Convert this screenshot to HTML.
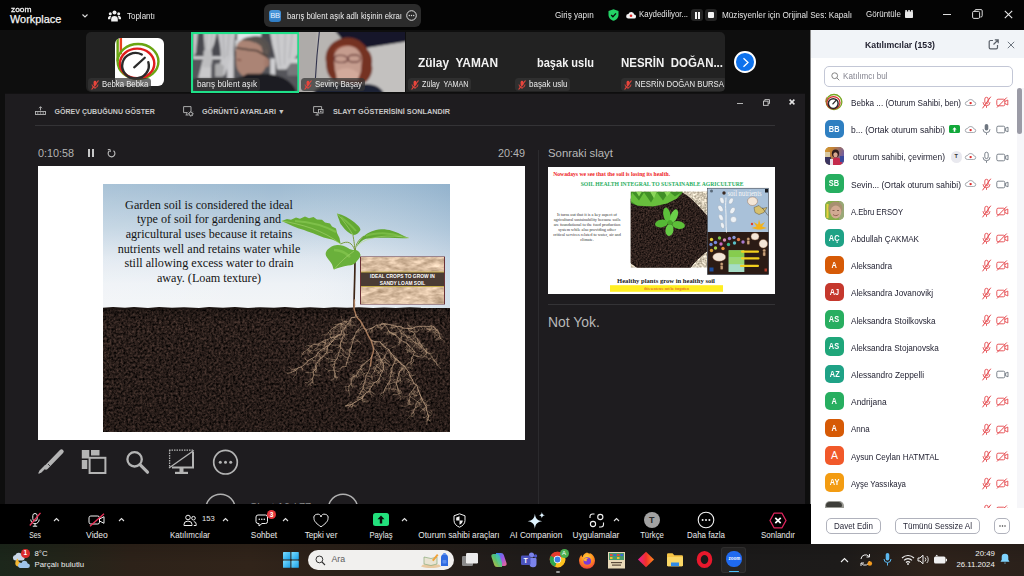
<!DOCTYPE html>
<html lang="tr">
<head>
<meta charset="utf-8">
<title>Zoom Workplace</title>
<style>
*{box-sizing:border-box;margin:0;padding:0}
html,body{width:1024px;height:576px;overflow:hidden;background:#0e0e0e}
body{position:relative;font-family:"Liberation Sans",sans-serif;color:#fff;font-size:10px;-webkit-font-smoothing:antialiased}
.abs{position:absolute}
.t{position:absolute;white-space:nowrap;line-height:1}
svg{position:absolute;overflow:visible}
/* top bar */
#top{left:0;top:0;width:1024px;height:29.700px;background:#040404}
/* strip */
.tile{position:absolute;top:32px;height:60px;background:#222;overflow:hidden}
.nm{position:absolute;height:13px;background:rgba(52,52,52,.72);border-radius:3.500px;color:#ececec;white-space:nowrap;overflow:hidden}
.big{position:absolute;font-weight:bold;color:#f2f2f2;white-space:nowrap;line-height:1}
/* share */
#share{left:5px;top:94px;width:800px;height:411px;background:#1e1c1f;overflow:hidden;box-shadow:0 -.3px 0 #1e1c1f}
/* panel */
#panel{left:811px;top:29.700px;width:213px;box-shadow:-.5px 0 0 #fff;height:513.900px;background:#fff;color:#222;overflow:hidden}
#phead{left:0;top:0;width:213px;height:28.700px;background:#f1f4f8}
.row{position:absolute;left:0;width:213px;height:27px}
.av{position:absolute;left:14.200px;top:4.200px;width:18.400px;height:18.400px;border-radius:5px;color:#fff;font-weight:bold;font-size:7px;line-height:18.400px;text-align:center;overflow:hidden}
.pn{position:absolute;left:40px;top:10.700px;line-height:1;color:#232333;white-space:nowrap}
/* toolbar */
#tb{left:0;top:504.300px;width:811px;height:39.300px;background:#000}
.tl{position:absolute;top:26.800px;font-size:9px;line-height:1;color:#ebebeb;white-space:nowrap;transform:translateX(-50%)}
/* taskbar */
#task{left:0;top:543.600px;width:1024px;height:32.400px;background:linear-gradient(180deg,rgba(0,0,0,.12),rgba(0,0,0,0) 60%),linear-gradient(90deg,#1c271b 0px,#23251a 60px,#2d2219 130px,#31241a 250px,#2c2119 330px,#201c1a 520px,#1b1a1a 700px,#1d1b1a 840px,#2f231b 930px,#2b211b 1024px)}
</style>
</head>
<body>
<div id="top" class="abs">
<span class="t" style="left:10.500px;top:5.800px;font-size:7.700px;transform-origin:0 50%;transform:scaleX(1.09);color:#f0f0f0;-webkit-text-stroke:.3px #f0f0f0">zoom</span>
<span class="t" style="left:10px;top:14.200px;font-size:10.900px;color:#f5f5f5;-webkit-text-stroke:.25px #f5f5f5">Workplace</span>
<svg style="left:81px;top:13px" width="8" height="6" viewBox="0 0 8 6"><path d="M1.5 1.5 L4 4 L6.5 1.5" fill="none" stroke="#ddd" stroke-width="1.1"/></svg>
<svg style="left:108px;top:9.500px" width="13" height="12" viewBox="0 0 13 12"><g fill="#f0f0f0"><circle cx="6.500" cy="2.600" r="2"/><circle cx="2.300" cy="3.800" r="1.500"/><circle cx="10.700" cy="3.800" r="1.500"/><path d="M3.200 11.500v-2.300a3.300 3.300 0 0 1 6.600 0v2.300z"/><path d="M0 9.300v-1.200a2.300 2.300 0 0 1 3.300-2.100a4 4 0 0 0-.9 2.600v.7zM13 9.300v-1.200a2.300 2.300 0 0 0-3.300-2.100a4 4 0 0 1 .9 2.600v.7z"/></g></svg>
<span class="t" style="left:127px;top:11.5px;font-size:8.9px;transform-origin:0 50%;transform:scaleX(0.8989);color:#e8e8e8">Toplantı</span>
<div class="abs" style="left:264px;top:4px;width:157px;height:23px;background:#2b2b2b;border-radius:6px"></div>
<div class="abs" style="left:269px;top:10px;width:12px;height:12px;background:linear-gradient(180deg,#4a98dc,#2f7cc4);border-radius:3px;font-size:7.600px;letter-spacing:-.4px;line-height:12.500px;text-align:center;color:#e4f1ff">BB</div>
<span class="t" style="left:286.500px;top:12.100px;font-size:8.9px;transform-origin:0 50%;transform:scaleX(0.8764);color:#ececec">barış bülent aşık adlı kişinin ekraı</span>
<svg style="left:406px;top:10px" width="11" height="11" viewBox="0 0 11 11"><circle cx="5.5" cy="5.500" r="4.800" fill="none" stroke="#ddd" stroke-width="1"/><circle cx="3.300" cy="5.500" r=".7" fill="#ddd"/><circle cx="5.500" cy="5.500" r=".7" fill="#ddd"/><circle cx="7.700" cy="5.500" r=".7" fill="#ddd"/></svg>
<span class="t" style="left:555px;top:10.59px;font-size:8.9px;transform-origin:0 50%;transform:scaleX(0.9157);color:#e4e4e4">Giriş yapın</span>
<svg style="left:608px;top:9px" width="11" height="12" viewBox="0 0 11 12"><path d="M5.500 0.300 L10.500 2 V6 C10.500 9 8 11 5.500 11.800 C3 11 0.500 9 0.500 6 V2 Z" fill="#23d366"/><path d="M3.200 6 L4.900 7.700 L8 4.400" fill="none" stroke="#0a0a0a" stroke-width="1.300"/></svg>
<svg style="left:626px;top:11px" width="10" height="8" viewBox="0 0 10 8"><path d="M2.300 7.500h5.600a2 2 0 0 0 .3-4a3 3 0 0 0-5.800-.4A2.200 2.200 0 0 0 2.300 7.500z" fill="#f3f3f3"/><circle cx="5" cy="4.800" r="1.300" fill="#e02828"/></svg>
<span class="t" style="left:638.500px;top:10.45px;font-size:8.9px;transform-origin:0 50%;transform:scaleX(0.8876);color:#e8e8e8">Kaydediliyor...</span>
<div class="abs" style="left:691px;top:9px;width:12px;height:12px;background:#242424;border-radius:3px"></div>
<div class="abs" style="left:694.500px;top:11.500px;width:2px;height:7px;background:#f4f4f4"></div><div class="abs" style="left:698px;top:11.500px;width:2px;height:7px;background:#f4f4f4"></div>
<div class="abs" style="left:705px;top:9px;width:12px;height:12px;background:#242424;border-radius:3px"></div>
<div class="abs" style="left:708px;top:12px;width:6px;height:6px;background:#f4f4f4;border-radius:1px"></div>
<span class="t" style="left:722px;top:10.62px;font-size:8.9px;transform-origin:0 50%;transform:scaleX(0.9213);color:#e4e4e4">Müzisyenler için Orijinal Ses: Kapalı</span>
<span class="t" style="left:865.500px;top:9.98px;font-size:8.9px;transform-origin:0 50%;transform:scaleX(0.8933);color:#e4e4e4">Görüntüle</span>
<svg style="left:905px;top:10px" width="8" height="8" viewBox="0 0 8 8"><rect x="0" y="1.500" width="8" height="6.500" rx=".8" fill="#e8e8e8"/><g fill="#e8e8e8"><rect x=".3" y="0" width="1.600" height="2"/><rect x="3.200" y="0" width="1.600" height="2"/><rect x="6.100" y="0" width="1.600" height="2"/></g></svg>
<div class="abs" style="left:943px;top:13.500px;width:8px;height:1px;background:#ddd"></div>
<svg style="left:972px;top:9px" width="11" height="10" viewBox="0 0 11 10"><rect x=".6" y="2.400" width="7" height="7" rx="1.200" fill="none" stroke="#ddd" stroke-width="1"/><path d="M2.800 2.400V1.800a1.200 1.200 0 0 1 1.200-1.200h5a1.200 1.200 0 0 1 1.200 1.200v5a1.200 1.200 0 0 1-1.200 1.200h-.6" fill="none" stroke="#ddd" stroke-width="1"/></svg>
<svg style="left:1004px;top:10px" width="9" height="9" viewBox="0 0 9 9"><path d="M.8.800 L8.200 8.200 M8.200.800 L.8 8.200" stroke="#e8e8e8" stroke-width="1.100"/></svg>
</div>
<!--S:strip--><div id="strip">
<div class="tile" style="left:86px;width:105px;border-radius:5px 0 0 5px">
<div class="abs" style="left:29px;top:5.700px;width:48.500px;height:48.500px;background:#fff;border-radius:6px;overflow:hidden">
<svg style="left:0;top:0" width="48.500" height="48.500" viewBox="0 0 48 48"><path d="M2.600 0V23" stroke="#6aa512" stroke-width="2.400" fill="none"/><path d="M5.800 0V16" stroke="#e8401e" stroke-width="2.400" fill="none"/><ellipse cx="22.800" cy="23.200" rx="20.200" ry="17.300" fill="none" stroke="#6aa512" stroke-width="2.400"/><ellipse cx="21.900" cy="25.200" rx="17" ry="14.700" fill="none" stroke="#e01e1e" stroke-width="2.400"/><path d="M26.500 16.300A13.200 12.600 0 1 0 33 24" fill="none" stroke="#2b2b2b" stroke-width="2.400" stroke-linecap="round"/><path d="M19 29L29.500 19.500" stroke="#2b2b2b" stroke-width="2.200" stroke-linecap="round"/></svg></div>
<div class="nm" style="left:2.2px;top:46px;width:63.2px"><svg style="left:2px;top:1.500px" width="10" height="10" viewBox="0 0 10 10"><rect x="3.600" y=".8" width="2.800" height="5" rx="1.400" fill="#e8453c"/><path d="M2 4.500a3 3 0 0 0 6 0M5 7.500V9" fill="none" stroke="#e8453c" stroke-width=".9"/><path d="M8.500.5L1.600 9.500" stroke="#e8453c" stroke-width="1.200"/></svg><span style="position:absolute;left:14px;top:0;font-size:8.6px;line-height:13.500px;transform-origin:0 50%;transform:scaleX(0.9037)">Bebka Bebka</span></div>
</div>
<div class="tile" style="left:191px;width:108.400px;background:#5e5e60;top:31.500px;height:61px">
<svg style="left:0;top:0" width="108.400" height="61" viewBox="0 0 108 60" preserveAspectRatio="none"><defs><filter id="b1" x="-20%" y="-20%" width="140%" height="140%"><feGaussianBlur stdDeviation=".9"/></filter></defs>
<g filter="url(#b1)"><rect x="-6" y="-6" width="120" height="72" fill="#55555a"/>
<rect x="-6" y="-6" width="120" height="30" fill="#4a4a50"/>
<rect x="2" y="24" width="40" height="2.600" fill="#d6d6d8"/>
<rect x="36" y="0" width="6.500" height="46" fill="#cdcdd0"/>
<rect x="46" y="0" width="24" height="10" fill="#e2e6ea"/><rect x="44" y="8" width="8" height="10" fill="#d0d3d6"/>
<rect x="79" y="26" width="5" height="18" fill="#cfcfd2"/><rect x="96" y="26" width="12" height="5" fill="#d2d2d4"/><rect x="96" y="31" width="12" height="12" fill="#77777a"/>
<path d="M2 0h5l-2 20l-3 6z" fill="#c4c4c6"/>
<path d="M12.500 0h13.500l-3 12l-2.600 6l-.4 28h-13l5-20l1.700-8z" fill="#c9c9cb"/>
<path d="M16 0l-1 18M21 0l-1.500 18" stroke="#a2a2a6" stroke-width=".8" fill="none"/>
<path d="M26.500 0h18l-2 14l-3.200 12l-5.600 16.500h-7.700l4-16l-1-12z" fill="#c6c6c9"/>
<path d="M32 0l1 26M38 0l-2 24" stroke="#a0a0a4" stroke-width=".8" fill="none"/>
<path d="M78.500 0h28.500v22l-6 6l-6 9h-9l-2-12l-3-12z" fill="#cbcbcd"/>
<path d="M86 0l3 34M94 0l-1 32M101 0l-3 26" stroke="#a6a6aa" stroke-width=".8" fill="none"/>
<path d="M12.500 19c2-2 6-2 8 0l1 8l-2 8h-8l1-8z" fill="#bdbdbf"/><path d="M24 32c3-2 7-1 9 2l-1 10h-8z" fill="#aaaaac"/>
<path d="M-6 46h42v20H-6z" fill="#38383b"/>
<ellipse cx="65" cy="17" rx="14" ry="13" fill="#57514f"/>
<path d="M44.500 18c0-7 6-12 14-12c8 0 16 5 17 14l-.5 12c-1 7-8 13-16 13c-8 0-13.500-6-14-13z" fill="#ab8474"/>
<path d="M50 8c6-5 18-5 24 4l2 12l-4-2l-2-8c-6-5-14-6-20-6z" fill="#5a5350"/>
<ellipse cx="75.500" cy="30" rx="2.500" ry="4.500" fill="#a37a6c"/>
<path d="M44.500 15.500l13 2l8.500 1l10 6" stroke="#3a2f2d" stroke-width="1.500" fill="none"/>
<path d="M46 27l4 1" stroke="#7a4a44" stroke-width="1.300"/>
<path d="M33 66c1-16 8-20 18-22l5-3l20 0c14 2 28 6 31 25z" fill="#1b1b21"/></g>
<rect x="1" y="1" width="106" height="58" fill="none" stroke="#1fe089" stroke-width="2.100"/></svg>
<div class="nm" style="left:2.5px;top:46.5px;width:66.5px"><span style="position:absolute;left:3.5px;top:0;font-size:8.6px;line-height:13.500px;transform-origin:0 50%;transform:scaleX(0.9514)">barış bülent aşık</span></div>
</div>
<div class="tile" style="left:299.400px;width:105.700px;background:#b5b5b8">
<svg style="left:0;top:0" width="105.700" height="60" viewBox="0 0 106 60" preserveAspectRatio="none"><g filter="url(#b1)"><rect x="-6" y="-6" width="118" height="72" fill="#b8b5b2"/>
<rect x="-6" y="-6" width="24" height="72" fill="#aeaba9"/>
<path d="M64 16.400L112 8.700V66H64z" fill="#c3c1bf"/>
<path d="M32 -6H112V8.700L63.800 16.400L43.800 8z" fill="#14162a"/>
<path d="M27 30c-2-12 6-22 18-24c10-2 20 4 24 12c4 4 5 10 4 15c2 6-2 14-6 17l-8 3l-24-4c-6-4-8-12-8-19z" fill="#743323"/>
<path d="M34 20c4-8 18-10 26-2c-4-2-8-3-12-2c-6 0-10 2-14 4z" fill="#934430"/>
<path d="M35 26c0-8 7-12 14-12c8 0 14 6 14 14l-1 12c-2 6-8 8-13 8c-6 0-12-4-13-10z" fill="#c59c8e"/>
<path d="M36 24.500c3-1.500 8-1.500 11 0c1.500 1 2 3 1 4.500c-2 2-8 2-11 .5c-1.500-1-1.500-3-1-5zM50 24c3-1.500 8-1.500 10.500 0c1 1.500 1 4 0 5c-2.500 1.500-8 1.500-10.500 0c-1-1.500-1-3.500 0-5z" fill="none" stroke="#5a2a2a" stroke-width="1.100"/>
<path d="M37 40c4-4 12-5 18-2l6 4l-2 6H38z" fill="#d2aa9b"/>
<path d="M13 66c0-9 10-14 22-14h32c10 0 19 5 19 14z" fill="#1b2136"/></g><path d="M20.800 -4L18 24L16.500 46" stroke="#1c1f3c" stroke-width="1.100" fill="none" opacity=".85"/></svg>
<div class="nm" style="left:1.8px;top:46px;width:64.0px"><svg style="left:2px;top:1.500px" width="10" height="10" viewBox="0 0 10 10"><rect x="3.600" y=".8" width="2.800" height="5" rx="1.400" fill="#e8453c"/><path d="M2 4.500a3 3 0 0 0 6 0M5 7.500V9" fill="none" stroke="#e8453c" stroke-width=".9"/><path d="M8.500.5L1.600 9.500" stroke="#e8453c" stroke-width="1.200"/></svg><span style="position:absolute;left:14px;top:0;font-size:8.6px;line-height:13.500px;transform-origin:0 50%;transform:scaleX(0.9025)">Sevinç Başay</span></div>
</div>
<div class="tile" style="left:406.200px;width:105.800px"><div class="big" style="left:12.3px;right:auto;top:23.500px;font-size:13px;text-align:left;transform-origin:0 50%;transform:scaleX(0.9151)">Zülay&nbsp; YAMAN</div><div class="nm" style="left:1.8px;top:46px;width:63.5px"><svg style="left:2px;top:1.500px" width="10" height="10" viewBox="0 0 10 10"><rect x="3.600" y=".8" width="2.800" height="5" rx="1.400" fill="#e8453c"/><path d="M2 4.500a3 3 0 0 0 6 0M5 7.500V9" fill="none" stroke="#e8453c" stroke-width=".9"/><path d="M8.500.5L1.600 9.500" stroke="#e8453c" stroke-width="1.200"/></svg><span style="position:absolute;left:14px;top:0;font-size:8.6px;line-height:13.500px;transform-origin:0 50%;transform:scaleX(0.8369)">Zülay&nbsp; YAMAN</span></div></div>
<div class="tile" style="left:512px;width:107.300px"><div class="big" style="left:24.5px;right:auto;top:23.500px;font-size:13px;text-align:left;transform-origin:0 50%;transform:scaleX(0.8482)">başak uslu</div><div class="nm" style="left:2.6px;top:46px;width:55.5px"><svg style="left:2px;top:1.500px" width="10" height="10" viewBox="0 0 10 10"><rect x="3.600" y=".8" width="2.800" height="5" rx="1.400" fill="#e8453c"/><path d="M2 4.500a3 3 0 0 0 6 0M5 7.500V9" fill="none" stroke="#e8453c" stroke-width=".9"/><path d="M8.500.5L1.600 9.500" stroke="#e8453c" stroke-width="1.200"/></svg><span style="position:absolute;left:14px;top:0;font-size:8.6px;line-height:13.500px;transform-origin:0 50%;transform:scaleX(0.9369)">başak uslu</span></div></div>
<div class="tile" style="left:619.300px;width:105.700px;border-radius:0 5px 5px 0"><div class="big" style="left:1.5px;right:auto;top:23.500px;font-size:13px;text-align:left;transform-origin:0 50%;transform:scaleX(0.8825)">NESRİN&nbsp; DOĞAN...</div><div class="nm" style="left:1.5px;top:46px;width:106.0px"><svg style="left:2px;top:1.500px" width="10" height="10" viewBox="0 0 10 10"><rect x="3.600" y=".8" width="2.800" height="5" rx="1.400" fill="#e8453c"/><path d="M2 4.500a3 3 0 0 0 6 0M5 7.500V9" fill="none" stroke="#e8453c" stroke-width=".9"/><path d="M8.500.5L1.600 9.500" stroke="#e8453c" stroke-width="1.200"/></svg><span style="position:absolute;left:14px;top:0;font-size:8.6px;line-height:13.500px;transform-origin:0 50%;transform:scaleX(0.9047)">NESRİN DOĞAN BURSA</span></div></div>
<div class="abs" style="left:734.300px;top:51.300px;width:21.400px;height:21.400px;border-radius:50%;background:#0e72ed;border:2px solid #fff"></div>
<svg style="left:741px;top:56.500px" width="9" height="11" viewBox="0 0 9 11"><path d="M2.500 1.300L7 5.500L2.500 9.700" fill="none" stroke="#fff" stroke-width="1.300"/></svg>
</div><!--E:strip-->
<div id="share" class="abs">
<!-- window controls -->
<div class="abs" style="left:732px;top:9px;width:6px;height:1.300px;background:#b4b4b4"></div>
<svg style="left:757.5px;top:4.5px" width="7" height="7" viewBox="0 0 7 7"><rect x=".5" y="2.200" width="4.600" height="4.200" fill="none" stroke="#bdbdbd" stroke-width="1"/><path d="M1.800 2V.6h4.700v4h-1.400" fill="none" stroke="#bdbdbd" stroke-width="1"/></svg>
<svg style="left:784px;top:5px" width="6" height="6" viewBox="0 0 6 6"><path d="M.6.600L5.400 5.400M5.400.600L.6 5.400" stroke="#e4e4e4" stroke-width="1.500"/></svg>
<!-- header -->
<svg style="left:30px;top:12px" width="11" height="9" viewBox="0 0 11 9"><g fill="none" stroke="#b8b8b8" stroke-width=".9"><rect x=".5" y="5.500" width="10" height="3"/><path d="M5.500 4.500V.8M4 2.200L5.500.700L7 2.200"/></g><g fill="#b8b8b8"><rect x="2" y="6.500" width="1.400" height="1"/><rect x="4.800" y="6.500" width="1.400" height="1"/><rect x="7.600" y="6.500" width="1.400" height="1"/></g></svg>
<span class="t" style="left:49.5px;top:14px;font-size:7.050px;font-weight:bold;color:#c6c6c6">GÖREV ÇUBUĞUNU GÖSTER</span>
<svg style="left:178px;top:11.5px" width="11" height="11" viewBox="0 0 11 11"><g fill="none" stroke="#b8b8b8" stroke-width=".9"><path d="M8 5V.6H.6v6h4"/><path d="M2.500 9h2.500M3.800 6.600V9"/><circle cx="7.800" cy="7.800" r="1.700"/></g><g stroke="#b8b8b8" stroke-width="1"><path d="M7.800 5v1M7.800 9.600v1M5 7.800h1M9.600 7.800h1M5.800 5.800l.7.700M9.100 9.100l.7.700M9.800 5.800l-.7.700M6.500 9.100l-.7.700"/></g></svg>
<span class="t" style="left:197px;top:14px;font-size:7.200px;font-weight:bold;color:#c6c6c6">GÖRÜNTÜ AYARLARI ▼</span>
<svg style="left:308px;top:12px" width="11" height="10" viewBox="0 0 11 10"><g fill="none" stroke="#b8b8b8" stroke-width=".9"><path d="M4.500 6.500H.6V.6h8v2.400"/><path d="M2.500 9h3.500M4.200 6.600V9"/><rect x="5.500" y="3.500" width="4.500" height="3.500"/></g><rect x="7" y="4.700" width="1.600" height="1.200" fill="#b8b8b8"/></svg>
<span class="t" style="left:328px;top:14px;font-size:7.250px;font-weight:bold;color:#c6c6c6">SLAYT GÖSTERİSİNİ SONLANDIR</span>
<div class="abs" style="left:30px;top:31px;width:740px;height:1px;background:#343336"></div>
<!-- timer -->
<span class="t" style="left:33px;top:53.5px;font-size:10.800px;color:#b4b4b4">0:10:58</span>
<div class="abs" style="left:83px;top:55px;width:2px;height:8px;background:#c8c8c8"></div><div class="abs" style="left:86.5px;top:55px;width:2px;height:8px;background:#c8c8c8"></div>
<svg style="left:102px;top:54.5px" width="9" height="9" viewBox="0 0 9 9"><path d="M6.500 1.700A3.400 3.400 0 1 1 2.300 1.900" fill="none" stroke="#c0c0c0" stroke-width="1.100"/><path d="M.8.600h2.400v2.400" fill="none" stroke="#c0c0c0" stroke-width="1"/></svg>
<span class="t" style="left:493px;top:53.5px;font-size:10.800px;color:#b4b4b4">20:49</span>
<!-- main slide -->
<div id="slide" class="abs" style="left:33px;top:72px;width:487px;height:274px;background:#fff;overflow:hidden"><svg style="left:65px;top:18px" width="347" height="248" viewBox="103 184 347 248">
<defs>
<linearGradient id="sky" x1="0" y1="0" x2="0" y2="1"><stop offset="0" stop-color="#9dbad1"/><stop offset=".35" stop-color="#bfd2e1"/><stop offset=".6" stop-color="#e0e8f0"/><stop offset=".8" stop-color="#eef2f6"/><stop offset="1" stop-color="#f3f5f7"/></linearGradient>
<linearGradient id="skyr" x1="0" y1="0" x2="1" y2="0"><stop offset="0" stop-color="#fff" stop-opacity=".12"/><stop offset=".5" stop-color="#fff" stop-opacity="0"/><stop offset="1" stop-color="#6d97bd" stop-opacity=".22"/></linearGradient>
<filter id="soil" x="0" y="0" width="100%" height="100%" color-interpolation-filters="sRGB"><feTurbulence type="fractalNoise" baseFrequency=".42" numOctaves="3" seed="4"/><feColorMatrix values=".46 0 0 0 -.068  .35 0 0 0 -.057  .31 0 0 0 -.052  0 0 0 0 1"/></filter>
<linearGradient id="soilsh" x1="0" y1="0" x2="0" y2="1"><stop offset="0" stop-color="#000" stop-opacity=".25"/><stop offset=".12" stop-color="#000" stop-opacity="0"/><stop offset="1" stop-color="#000" stop-opacity=".1"/></linearGradient>
<filter id="sand" x="0" y="0" width="100%" height="100%" color-interpolation-filters="sRGB"><feTurbulence type="fractalNoise" baseFrequency=".09 .22" numOctaves="3" seed="2"/><feColorMatrix values=".5 0 0 0 .6  .5 0 0 0 .49  .5 0 0 0 .38  0 0 0 0 1"/></filter>
<filter id="lb" x="-10%" y="-10%" width="120%" height="120%"><feGaussianBlur stdDeviation=".35"/></filter>
</defs>
<rect x="103" y="184" width="347" height="125" fill="url(#sky)"/><rect x="103" y="184" width="347" height="125" fill="url(#skyr)"/>
<rect x="103" y="308" width="347" height="124" fill="#2a1f1b"/>
<rect x="103" y="308" width="347" height="124" filter="url(#soil)"/>
<rect x="103" y="308" width="347" height="124" fill="url(#soilsh)"/>
<path d="M103 308.500l10-.8l12 .9l9-.7l14 .8l11-.9l13 .7l12-.5l15 .8l10-.9l14 .6l12-.7l13 .9l12-.6l14 .5l11-.8l13 .9l12-.6l14 .7l10-.8l13 .6l12-.5l14 .8l11-.7l12 .6l14-.7l11 .5" fill="none" stroke="#1c1411" stroke-width="1.600"/>
<g filter="url(#lb)">
<path d="M354.800 249C355.500 270 354 290 354 309" fill="none" stroke="#3d2619" stroke-width="1.700"/>
<path d="M354.800 250C352 243 348 240 340.700 244" fill="none" stroke="#7a9a3e" stroke-width="1"/><path d="M354.800 250C354.500 243 353.500 239 353 235" fill="none" stroke="#7a9a3e" stroke-width="1"/><path d="M355.300 250C356 244 358 240 364 236" fill="none" stroke="#7a9a3e" stroke-width="1"/>
<path d="M281.600 220.900L287 219L291 219.800L296 217.500L300 218.800L305 216.600L309 218.200L313.500 217.100L317 219.500L322 219.800L325 222.500L330 223.500L332 226.500L336 228.400L337 233L339.500 238L340.700 244.300C337 242 334.500 240.500 332 239.600C326 238.500 321 236.500 316 234.500C312 232.500 308 232 304 230C296 227.500 289 224.500 281.600 220.900z" fill="#68ad36"/>
<path d="M295 221C310 222 325 226 336 232" fill="none" stroke="#8fcf58" stroke-width="2.200" opacity=".55"/>
<path d="M281.600 220.900C300 224 324 230 340.700 244.300" fill="none" stroke="#b5dc7c" stroke-width=".5"/>
<path d="M337 213.400C343 214.500 349 218 354 222C358 225.500 360.800 228 360.400 230C359 233 356 235 353 235C349 233.500 345 230 343 227C341 224 340.500 224.600 339.500 221C338.500 218 337.500 216 337 213.400z" fill="#63a833"/>
<path d="M341 217C346 221 352 226 356 231" fill="none" stroke="#8fcf58" stroke-width="2" opacity=".5"/>
<path d="M337 213.400C343 220 349 228 353 235" fill="none" stroke="#b5dc7c" stroke-width=".5"/>
<path d="M356.600 247C358 242 361 238.500 364 236C368 232.500 374 229.800 381 229.300C388 229 395 231.500 400 234C403 235.500 406 237 409 238C402 238.800 395 238 388.500 237.800C381 237.800 373 237.800 366 238.700C362 240 359 243 356.600 247z" fill="#62a732"/>
<path d="M366 236C376 232 390 232.500 402 236.500" fill="none" stroke="#8fcf58" stroke-width="1.800" opacity=".5"/>
<path d="M358 245C368 236 390 234 409 238" fill="none" stroke="#b5dc7c" stroke-width=".5"/>
<path d="M338 245C334 244.500 329 247.500 326.500 251C325 253.500 325.700 255.500 327 257.500C328.500 260 331 262 332 264.500C333 266.500 333 269 334 269.600C338 268 343 266 348 265.500C352 265.500 354.800 264 357 261C359.500 258 360.800 256.500 360.400 254.600C359.500 251.500 357.500 250 355 250C352 250 350 249.500 348 248C345 246 341.500 245 338 245z" fill="#6bb03a"/>
<path d="M334 250C340 250 346 253 350 257" fill="none" stroke="#8fcf58" stroke-width="2.500" opacity=".5"/>
<path d="M354 251C347 256 340 262 334 269.600" fill="none" stroke="#b5dc7c" stroke-width=".5"/>
</g>
<g fill="none" stroke="#c4a486" stroke-linecap="round" stroke-linejoin="round"><path d="M354.5 300.0L354.3 302.7L354.5 305.3L354.0 308.1L354.4 310.3L355.4 312.9L355.7 314.8L357.7 318.2L360.2 320.6L362.4 324.4L363.5 326.4L364.4 328.3L366.0 330.6L367.4 333.8L369.0 337.0L371.0 340.3L371.8 342.8L372.7 345.5L373.5 347.8L373.4 351.1L372.8 353.5L371.9 355.8L371.2 359.0L370.9 362.6L370.3 365.9" stroke-width="1.5" stroke="#a5795a"/><path d="M356.0 315.0L354.8 317.3L351.1 317.8L350.7 319.9L349.2 322.5L345.9 325.6L345.5 327.6L341.9 330.4L341.2 333.8L337.3 335.5L334.6 337.9L333.2 340.8L330.1 343.9L326.8 346.4L324.0 348.3L321.3 349.9L318.1 352.3L316.2 355.9L311.6 358.7L308.1 360.5L306.0 363.6L301.3 366.9L298.2 367.9L295.8 370.4L291.6 372.2" stroke-width="0.7"/><path d="M345.0 328.0L343.5 331.5L344.1 334.2L342.8 337.2L341.5 341.1L340.3 344.2L340.7 348.1L339.0 352.2L338.1 355.6L337.2 358.6L334.9 361.5L334.8 363.8L333.8 367.4L333.9 370.1L335.0 373.5L335.2 376.8" stroke-width="0.6"/><path d="M330.0 344.0L328.0 346.0L327.0 348.9L326.7 352.0L323.6 356.2L320.2 358.7L317.4 362.5L315.8 365.9L316.0 369.2L313.2 371.6L313.7 374.6L312.6 378.6L312.8 382.2" stroke-width="0.6"/><path d="M338.0 336.0L336.2 337.0L333.3 337.2L330.5 337.5L327.8 339.5L325.4 339.9L322.5 341.3L318.7 344.1L314.4 344.2L311.6 345.7L308.5 348.7L307.2 349.8L303.7 352.2" stroke-width="0.5"/><path d="M366.0 331.0L368.6 329.0L371.2 328.6L374.3 326.7L376.8 325.1L379.9 325.0L383.8 323.6L387.1 324.1L391.6 325.1L396.8 326.4L399.6 326.4L403.4 328.1L407.7 328.5L412.4 328.4L415.1 327.0L419.8 326.2L424.7 326.4L428.5 326.4L431.2 325.8L433.5 326.5L435.4 328.8L437.2 329.7L438.9 332.7L439.3 335.7L440.6 338.4" stroke-width="0.7"/><path d="M371.0 340.0L373.9 341.4L376.8 341.8L380.2 341.9L381.9 344.5L384.9 347.2L388.8 349.6L391.0 353.0L392.9 355.2L395.3 358.7L398.2 360.5L401.0 363.9L404.6 366.2L406.1 368.6L408.7 371.9L409.8 375.8L412.4 379.6L413.7 383.4L416.8 385.1L418.2 389.9L419.8 393.9L421.7 398.3L423.9 402.8L426.2 406.9L426.8 410.6L427.6 413.7L428.6 415.9L427.9 419.8" stroke-width="0.8"/><path d="M373.5 348.0L375.8 350.5L377.9 353.3L379.7 356.7L380.9 360.1L383.3 363.4L383.4 366.0L383.5 369.6L380.7 374.4L379.5 378.2L376.7 381.5L374.3 382.6L372.3 385.7L370.1 388.7L368.8 391.4L365.8 393.1L364.0 395.6L362.1 398.2L359.9 399.3L355.3 402.0L350.9 404.8L345.6 405.9" stroke-width="0.7"/><path d="M372.0 356.0L370.0 359.1L366.9 361.6L364.3 364.0L361.8 366.5L360.0 369.3L358.1 372.1L356.5 375.4L353.5 376.5L351.6 379.2L351.2 383.5L348.9 386.1L348.7 390.6" stroke-width="0.6"/><path d="M384.0 324.0L386.9 327.3L388.3 330.2L389.4 331.8L392.8 333.3L395.8 335.2L398.2 337.6L401.0 340.2L404.1 341.9L408.6 344.9L409.6 346.4L412.3 348.8L414.6 351.5L413.4 355.0L411.8 357.8L411.1 361.7" stroke-width="0.6"/><path d="M396.0 358.0L394.4 362.0L393.9 363.8L392.1 367.3L392.0 371.2L390.2 376.5L390.2 380.3L387.8 384.0L385.5 387.9L383.6 392.3" stroke-width="0.6"/><path d="M362.0 324.0L360.7 327.1L358.3 329.3L356.1 332.1L354.7 335.9L354.0 337.9L352.5 342.2L351.5 346.7L349.9 350.0L349.8 354.8L348.1 358.1L346.7 362.5L346.0 366.4" stroke-width="0.6"/><path d="M408.0 328.0L409.3 330.8L412.0 331.6L414.9 333.8L415.2 337.0L417.6 338.8L419.6 342.2L421.7 345.6L424.7 349.6L426.7 352.8" stroke-width="0.6"/><path d="M404.0 366.0L402.0 369.5L399.6 371.2L398.7 374.8L397.8 378.0L397.4 380.3L396.2 383.2L397.7 388.1L398.7 390.0L400.1 393.2" stroke-width="0.6"/><path d="M416.0 386.0L413.4 389.4L411.4 391.7L409.4 394.0L410.2 396.6L409.3 399.8L408.9 404.7" stroke-width="0.5"/><path d="M396.0 326.0L397.4 327.9L400.3 330.6L401.2 333.3L404.7 334.8L406.9 337.1L409.9 337.4L413.7 341.6L416.9 343.2L420.1 346.4L423.9 349.2L426.2 351.8L429.3 353.3L432.0 356.8L434.1 360.3L436.8 363.9" stroke-width="0.5"/><path d="M370.0 366.0L369.6 369.4L367.8 372.8L366.0 375.4L365.6 379.2L365.0 381.8L363.6 385.3L363.1 388.6L360.9 391.8L360.0 393.6" stroke-width="0.6"/><path d="M350.0 320.0L348.2 321.5L346.1 321.7L344.5 321.4L341.6 323.2L338.2 324.3L335.8 326.4L333.4 327.7L329.9 330.5L328.5 332.6" stroke-width="0.5"/><path d="M388.0 350.0L386.6 352.6L384.9 356.1L384.7 358.0L382.5 359.7L380.5 362.5L377.7 364.4L376.4 366.1L375.2 368.6L374.4 371.6" stroke-width="0.5"/><path d="M422.0 398.0L419.3 400.1L417.3 401.6L415.9 404.1L415.6 407.4L414.4 409.1L413.5 412.4" stroke-width="0.5"/><path d="M351.1 317.8L352.8 317.5L354.6 317.5L356.3 317.2L358.0 316.7M350.7 319.9L351.1 320.9L350.7 321.7L350.8 322.7L350.1 323.5M349.2 322.5L350.4 324.1L352.2 325.2L354.4 325.3L356.4 326.1M345.9 325.6L344.1 325.1L342.4 324.4L340.5 324.7L339.5 326.2M345.5 327.6L343.5 327.5L341.8 326.5L341.3 324.7L340.3 323.1M341.9 330.4L342.2 331.9L343.6 332.9L344.8 334.1L344.4 335.7M341.2 333.8L340.0 334.8L338.4 334.8L336.9 335.4L336.5 336.8M337.3 335.5L335.3 336.5L333.1 337.2L331.3 338.4L330.7 340.4M334.6 337.9L336.3 336.5L338.5 335.8L340.7 335.4L342.6 334.3M333.2 340.8L330.9 341.3L329.2 342.9L327.6 344.6L327.3 346.8M330.1 343.9L332.0 345.2L334.3 345.3L336.7 345.1L339.1 345.4M326.8 346.4L327.5 348.1L327.7 349.9L327.1 351.7L327.5 353.4M324.0 348.3L324.5 348.9L324.9 349.6L324.9 350.4L325.0 351.3M321.3 349.9L320.0 349.0L318.4 349.1L317.1 350.0L315.7 350.7M318.1 352.3L318.9 353.7L319.6 355.1L320.3 356.6L320.6 358.1M316.2 355.9L317.7 356.1L319.3 356.2L320.6 357.0L320.9 358.4M311.6 358.7L312.4 359.4L313.2 360.1L314.2 360.6L315.2 360.9M308.1 360.5L307.0 360.5L306.0 360.0L305.7 359.0L305.0 358.1M306.0 363.6L307.1 364.5L308.5 364.3L309.6 363.5L311.0 363.0M301.3 366.9L301.6 367.7L302.4 368.3L302.7 369.2L302.1 369.9M298.2 367.9L297.3 368.4L296.2 368.6L295.2 368.8L294.5 369.6M295.8 370.4L296.6 372.4L296.1 374.4L294.5 376.0L293.3 377.8M291.6 372.2L290.6 372.6L289.4 372.7L288.3 373.1L287.2 373.2M344.1 334.2L344.2 335.7L344.7 337.2L345.8 338.3L346.5 339.7M342.8 337.2L341.2 338.7L338.8 338.9L336.4 339.3L334.1 339.8M341.5 341.1L341.0 341.8L340.5 342.6L340.6 343.5L341.3 344.0M340.3 344.2L340.4 345.1L340.0 345.9L339.5 346.5L339.1 347.3M340.7 348.1L341.5 348.5L342.2 349.0L342.8 349.6L343.5 350.1M339.0 352.2L337.4 353.3L335.9 354.6L334.9 356.2L335.2 358.0M338.1 355.6L339.1 356.1L340.2 355.8L341.1 355.3L342.2 355.1M337.2 358.6L335.3 359.7L332.9 359.3L330.6 359.1L328.7 357.9M334.9 361.5L333.2 361.6L331.5 361.4L330.0 362.2L328.3 362.2M334.8 363.8L334.1 364.2L333.2 364.2L332.6 364.8L332.5 365.6M333.8 367.4L334.3 369.5L334.8 371.7L335.1 373.9L334.5 376.0M333.9 370.1L331.5 370.3L329.1 370.4L326.8 369.7L325.2 368.0M335.0 373.5L334.0 374.8L334.4 376.4L335.8 377.3L337.6 377.5M335.2 376.8L333.9 377.7L333.7 379.1L332.5 379.9L330.9 380.1M327.0 348.9L325.7 348.8L324.5 348.9L323.5 348.2L322.2 348.3M326.7 352.0L326.3 352.8L326.0 353.6L325.1 353.9L324.2 353.8M323.6 356.2L324.7 357.3L326.2 358.1L327.8 358.6L329.2 359.5M320.2 358.7L319.8 359.6L318.8 360.0L317.8 360.3L317.3 361.2M317.4 362.5L315.7 363.3L315.2 364.9L315.3 366.6L316.0 368.2M315.8 365.9L316.3 367.7L316.7 369.4L316.4 371.2L315.0 372.5M316.0 369.2L315.0 369.9L313.8 369.6L313.0 368.8L312.3 367.9M313.2 371.6L311.6 372.5L309.8 372.8L307.9 372.5L306.0 372.5M313.7 374.6L315.4 374.8L317.0 375.1L318.6 375.1L320.3 375.3M312.6 378.6L310.9 379.9L309.3 381.3L307.5 382.6L305.3 382.4M312.8 382.2L311.2 382.8L309.8 383.9L308.3 384.7L307.9 386.3M333.3 337.2L333.9 337.7L334.6 338.1L335.3 338.5L335.5 339.1M330.5 337.5L331.9 338.2L332.5 339.5L331.7 340.8L331.7 342.2M327.8 339.5L326.8 341.0L325.3 342.2L323.3 342.1L321.3 342.1M325.4 339.9L325.5 341.1L325.2 342.2L325.5 343.3L325.4 344.5M322.5 341.3L323.3 342.2L324.5 342.5L325.2 343.4L324.8 344.5M318.7 344.1L318.0 346.0L317.1 347.9L315.1 348.6L313.8 350.3M314.4 344.2L316.0 344.5L317.5 345.1L319.0 345.6L320.4 345.0M311.6 345.7L309.9 346.0L308.3 345.5L306.5 345.8L305.3 346.9M308.5 348.7L308.0 350.6L307.8 352.5L308.2 354.4L309.5 355.9M307.2 349.8L308.0 350.6L309.2 350.8L310.4 350.8L311.4 350.4M303.7 352.2L303.6 352.9L303.1 353.6L302.4 353.8L301.5 354.0M371.2 328.6L371.2 329.5L371.6 330.3L371.7 331.2L371.9 332.1M374.3 326.7L372.5 327.8L370.4 328.6L369.4 330.4L368.7 332.4M376.8 325.1L378.1 326.5L379.6 327.6L381.4 328.4L383.2 327.8M379.9 325.0L381.0 326.0L380.9 327.4L381.3 328.8L381.4 330.2M383.8 323.6L382.4 323.1L381.2 323.7L380.6 324.9L379.9 326.0M387.1 324.1L385.9 324.5L384.6 324.2L383.3 324.2L382.1 323.7M391.6 325.1L391.5 326.3L391.4 327.4L391.9 328.4L392.8 329.2M396.8 326.4L395.4 326.7L394.3 327.5L392.9 327.9L391.7 328.7M399.6 326.4L400.6 326.3L401.7 326.3L402.5 327.0L402.4 327.9M403.4 328.1L402.5 328.4L402.1 329.2L401.7 330.0L401.3 330.7M407.7 328.5L408.8 328.2L409.7 328.7L410.7 328.8L411.8 328.9M412.4 328.4L411.5 327.8L410.6 327.2L409.6 326.8L409.1 325.9M415.1 327.0L414.2 327.8L414.3 329.0L415.0 329.9L414.7 331.1M419.8 326.2L421.1 326.8L422.1 327.7L422.5 329.0L423.1 330.1M424.7 326.4L426.2 327.6L427.2 329.2L429.0 330.1L431.0 329.7M428.5 326.4L430.9 326.8L432.1 328.8L434.3 329.9L436.6 330.7M431.2 325.8L431.6 327.4L430.8 328.9L429.7 330.2L428.5 331.5M433.5 326.5L432.7 327.7L431.7 328.7L430.1 328.8L429.0 329.6M435.4 328.8L433.3 329.9L430.9 329.8L428.5 329.7L427.1 328.0M437.2 329.7L436.5 331.0L435.1 331.8L433.5 331.7L432.1 331.0M438.9 332.7L437.1 332.3L435.5 333.2L433.8 332.6L432.0 332.9M439.3 335.7L439.9 336.4L440.6 337.1L441.5 337.2L442.4 336.8M440.6 338.4L439.4 339.2L438.2 340.0L436.8 339.8L435.3 339.9M376.8 341.8L375.7 342.0L374.8 342.6L374.2 343.5L374.2 344.5M380.2 341.9L380.9 343.3L382.4 344.0L383.3 345.2L384.7 346.1M381.9 344.5L383.4 344.5L384.6 343.8L385.8 343.0L387.1 342.4M384.9 347.2L385.4 347.8L386.1 348.2L386.1 348.9L386.0 349.7M388.8 349.6L389.3 351.7L390.5 353.5L390.7 355.6L392.0 357.4M391.0 353.0L391.2 354.4L391.6 355.8L390.7 357.0L391.2 358.4M392.9 355.2L393.7 356.4L393.9 357.9L395.1 358.8L396.8 358.7M395.3 358.7L397.1 359.1L398.1 360.5L398.7 362.1L400.4 362.8M398.2 360.5L397.4 360.3L396.5 360.2L395.8 359.8L394.9 359.5M401.0 363.9L402.2 365.6L402.0 367.6L401.9 369.6L403.4 371.0M404.6 366.2L404.2 367.7L404.1 369.3L403.9 370.8L403.6 372.4M406.1 368.6L404.5 369.1L402.9 368.5L401.2 368.1L399.6 367.6M408.7 371.9L407.8 372.0L407.0 372.5L406.7 373.2L406.2 374.0M409.8 375.8L410.9 375.7L412.1 375.8L413.2 375.4L414.1 374.6M412.4 379.6L411.0 380.4L409.3 380.1L408.0 379.1L406.4 378.7M413.7 383.4L412.8 383.5L412.2 384.2L411.3 384.2L410.4 384.5M416.8 385.1L414.9 385.9L414.1 387.7L413.1 389.4L413.4 391.3M418.2 389.9L418.6 391.1L417.9 392.1L416.6 392.4L415.5 391.7M419.8 393.9L420.7 395.9L421.5 397.9L420.4 399.8L421.3 401.8M421.7 398.3L421.7 399.0L422.0 399.6L422.2 400.3L422.4 401.0M423.9 402.8L425.4 403.4L426.2 404.7L427.7 405.4L429.4 405.4M426.2 406.9L425.0 408.4L423.0 409.2L421.3 410.4L420.3 412.0M426.8 410.6L425.7 409.9L424.3 410.0L423.0 409.7L422.4 408.6M427.6 413.7L427.3 415.2L426.2 416.4L425.1 417.5L423.4 417.6M428.6 415.9L427.7 417.3L426.9 418.8L427.2 420.4L426.0 421.7M427.9 419.8L428.7 419.9L429.3 420.4L429.9 420.8L430.3 421.4M377.9 353.3L380.0 352.9L382.0 353.6L383.3 355.1L385.2 356.0M379.7 356.7L377.7 356.1L376.7 354.4L376.4 352.5L377.2 350.7M380.9 360.1L382.5 359.8L384.0 360.3L385.5 361.0L386.0 362.4M383.3 363.4L385.2 362.6L387.1 363.1L388.6 364.3L389.2 366.1M383.4 366.0L382.9 367.4L383.1 368.9L384.2 370.1L384.9 371.4M383.5 369.6L381.6 370.4L380.2 371.8L378.7 373.1L377.2 374.4M380.7 374.4L380.7 375.8L381.7 376.9L382.9 377.9L383.6 379.2M379.5 378.2L378.9 379.0L379.2 379.9L380.0 380.6L380.8 381.3M376.7 381.5L377.6 381.3L378.4 381.4L379.3 381.4L380.0 380.9M374.3 382.6L372.8 383.0L371.5 383.9L369.9 383.6L368.5 384.2M372.3 385.7L371.2 386.7L369.7 386.8L368.1 387.0L366.7 387.5M370.1 388.7L368.2 388.4L366.3 388.4L364.5 387.8L362.7 388.2M368.8 391.4L370.5 391.9L372.3 392.1L373.3 393.5L374.9 394.2M365.8 393.1L364.1 394.2L363.1 395.8L361.5 396.9L359.8 397.9M364.0 395.6L362.5 396.7L360.7 397.0L358.8 397.5L357.7 398.9M362.1 398.2L363.2 398.9L364.0 399.8L364.0 400.9L364.4 402.0M359.9 399.3L359.2 399.5L358.4 399.3L357.6 399.5L356.9 399.4M355.3 402.0L353.7 402.7L352.7 404.1L352.5 405.7L351.9 407.2M350.9 404.8L350.0 405.5L349.5 406.4L348.7 407.1L348.7 408.1M345.6 405.9L347.3 405.0L348.5 403.6L350.1 402.6L352.0 402.1M366.9 361.6L365.2 362.5L363.6 363.6L362.3 364.9L360.8 366.1M364.3 364.0L363.5 364.9L362.7 365.8L361.4 365.7L360.4 366.5M361.8 366.5L361.9 368.3L361.7 370.2L362.6 371.9L363.7 373.5M360.0 369.3L361.1 369.6L362.2 369.4L362.9 368.6L363.9 368.1M358.1 372.1L358.0 373.1L358.6 374.1L359.0 375.1L359.1 376.2M356.5 375.4L356.5 376.2L356.9 376.8L357.6 377.3L357.8 378.1M353.5 376.5L352.2 376.9L351.4 378.0L350.5 378.9L349.1 379.0M351.6 379.2L353.6 378.3L354.6 376.5L353.9 374.7L351.9 373.9M351.2 383.5L351.4 384.5L351.5 385.4L351.8 386.3L352.6 386.9M348.9 386.1L348.0 386.5L347.1 386.5L346.1 386.7L345.1 386.6M348.7 390.6L349.2 391.8L349.0 393.1L349.8 394.2L349.3 395.4M388.3 330.2L389.4 332.2L391.7 332.9L393.6 334.4L396.0 334.9M389.4 331.8L388.3 331.7L387.3 332.2L387.0 333.2L387.0 334.2M392.8 333.3L392.9 334.2L393.7 334.6L394.7 334.7L395.3 334.1M395.8 335.2L394.1 334.5L392.1 334.4L390.5 333.5L389.1 332.3M398.2 337.6L399.2 338.7L399.3 340.1L399.8 341.4L399.1 342.7M401.0 340.2L400.3 341.4L400.0 342.8L398.8 343.6L398.2 344.9M404.1 341.9L406.0 342.0L407.3 343.2L407.8 344.9L409.2 346.1M408.6 344.9L407.7 346.6L406.8 348.4L407.2 350.2L407.5 352.2M409.6 346.4L409.8 347.7L409.4 349.0L409.2 350.4L409.9 351.5M412.3 348.8L411.3 350.4L409.3 351.0L407.4 350.1L405.5 349.5M414.6 351.5L412.7 351.5L410.8 351.8L408.9 351.8L407.1 352.5M413.4 355.0L415.5 355.9L417.6 356.7L419.9 356.4L421.9 355.4M411.8 357.8L413.4 359.4L413.3 361.6L411.7 363.3L409.8 364.8M411.1 361.7L409.8 362.5L408.3 362.9L407.4 364.1L406.3 365.2M393.9 363.8L394.8 363.6L395.8 363.5L396.8 363.4L397.4 362.8M392.1 367.3L391.0 369.2L391.5 371.3L393.2 372.8L395.5 373.3M392.0 371.2L390.9 372.2L389.9 373.2L389.2 374.4L388.6 375.6M390.2 376.5L391.5 376.3L392.7 375.8L393.2 374.7L394.0 373.7M390.2 380.3L389.9 381.1L389.8 381.9L389.4 382.6L388.7 383.0M387.8 384.0L390.0 383.9L392.0 383.2L393.9 382.2L396.0 382.4M385.5 387.9L387.3 388.8L389.3 388.8L390.7 387.5L390.7 385.6M383.6 392.3L382.3 392.9L381.1 393.4L380.7 394.6L381.3 395.7M358.3 329.3L360.6 329.4L362.7 328.6L365.0 328.6L366.8 329.9M356.1 332.1L357.6 331.9L358.6 330.8L360.2 330.5L361.5 331.2M354.7 335.9L354.1 336.8L353.5 337.7L352.7 338.4L351.8 339.0M354.0 337.9L353.9 338.7L353.1 339.2L352.2 339.4L351.3 339.6M352.5 342.2L354.9 342.1L357.0 340.9L359.3 341.5L360.5 343.5M351.5 346.7L351.3 347.5L350.8 348.0L350.3 348.6L349.4 348.8M349.9 350.0L350.0 351.7L351.3 353.0L353.3 352.8L355.1 352.3M349.8 354.8L347.9 355.0L346.2 354.2L345.6 352.5L346.2 350.9M348.1 358.1L346.1 357.3L344.2 356.7L343.2 355.0L341.8 353.6M346.7 362.5L347.4 362.7L347.8 363.3L348.4 363.8L349.0 364.2M346.0 366.4L344.3 366.9L342.5 366.6L341.1 367.6L340.6 369.2M412.0 331.6L414.2 331.7L416.4 332.1L418.2 331.0L418.8 329.2M414.9 333.8L413.6 334.7L413.5 336.1L412.9 337.5L413.5 338.8M415.2 337.0L414.8 338.2L415.0 339.6L415.7 340.7L415.4 342.0M417.6 338.8L417.5 341.0L418.6 343.0L420.6 344.2L423.0 344.1M419.6 342.2L419.6 343.1L418.9 343.8L417.9 343.8L416.8 343.7M421.7 345.6L421.2 346.3L421.4 347.1L421.7 347.9L421.5 348.7M424.7 349.6L425.4 350.0L425.5 350.7L425.2 351.4L424.4 351.7M426.7 352.8L426.1 354.7L426.2 356.6L427.6 358.1L429.1 359.6M399.6 371.2L399.9 372.0L399.6 372.7L399.0 373.3L398.1 373.5M398.7 374.8L399.8 376.5L400.4 378.5L400.6 380.5L402.2 381.8M397.8 378.0L397.3 379.0L396.2 379.4L395.0 379.3L393.9 379.7M397.4 380.3L398.1 380.6L398.9 380.7L399.6 380.3L400.4 380.2M396.2 383.2L396.4 384.2L396.8 385.2L397.4 386.1L397.3 387.1M397.7 388.1L397.4 389.6L398.1 391.0L397.9 392.5L398.9 393.6M398.7 390.0L396.8 390.0L395.2 389.2L393.4 389.1L391.6 389.3M400.1 393.2L398.4 393.8L396.8 394.6L395.0 394.7L393.2 394.5M411.4 391.7L411.9 393.3L413.2 394.5L414.9 395.2L416.6 395.8M409.4 394.0L411.3 394.2L413.1 393.8L414.3 392.5L414.7 390.9M410.2 396.6L411.9 397.9L413.9 399.0L415.6 400.3L417.4 401.6M409.3 399.8L409.0 400.4L409.3 401.1L410.0 401.3L410.8 401.3M408.9 404.7L410.0 404.4L411.1 404.2L412.3 404.2L413.4 403.8M400.3 330.6L398.4 332.0L396.0 332.3L393.6 332.8L391.4 333.6M401.2 333.3L401.8 334.9L401.5 336.6L401.0 338.3L401.9 339.9M404.7 334.8L404.0 335.8L402.8 336.5L401.5 336.8L400.8 338.0M406.9 337.1L407.3 338.6L408.7 339.4L410.4 339.4L412.1 339.4M409.9 337.4L407.5 336.9L405.6 335.4L404.4 333.5L403.3 331.5M413.7 341.6L411.6 342.2L409.7 341.2L407.8 340.4L405.7 339.7M416.9 343.2L415.0 344.1L414.5 346.0L412.8 347.2L412.6 349.1M420.1 346.4L421.2 346.0L422.4 345.8L423.6 345.7L424.7 346.1M423.9 349.2L423.5 350.1L422.9 350.9L421.9 351.3L420.8 351.5M426.2 351.8L426.3 353.5L425.1 354.9L424.4 356.5L422.7 357.4M429.3 353.3L427.4 352.9L426.3 351.4L426.6 349.7L426.7 347.9M432.0 356.8L431.2 357.5L430.6 358.4L429.5 358.6L428.3 358.9M434.1 360.3L434.3 361.1L435.0 361.6L435.9 361.9L436.8 361.8M436.8 363.9L437.1 365.3L438.6 366.1L439.4 367.4L440.4 368.6M367.8 372.8L368.4 373.1L369.1 372.9L369.8 373.2L370.1 373.8M366.0 375.4L367.4 376.2L369.1 376.3L370.5 377.0L372.2 376.8M365.6 379.2L364.1 380.7L362.1 381.7L361.3 383.6L360.0 385.2M365.0 381.8L364.8 382.6L364.2 383.0L363.4 383.4L363.0 384.0M363.6 385.3L362.8 386.5L361.7 387.5L360.7 388.5L359.3 389.0M363.1 388.6L364.7 390.0L365.8 391.6L367.9 392.1L370.0 392.1M360.9 391.8L362.0 391.6L362.9 392.0L363.9 391.8L364.5 391.0M360.0 393.6L361.8 394.6L362.7 396.2L362.6 398.1L362.5 399.9M346.1 321.7L345.7 322.4L345.3 323.1L345.3 323.9L344.7 324.5M344.5 321.4L346.1 322.1L347.3 323.3L349.0 323.9L350.6 324.7M341.6 323.2L341.2 325.3L340.6 327.4L340.7 329.5L341.5 331.5M338.2 324.3L340.5 323.8L342.8 324.0L344.7 322.7L345.0 320.7M335.8 326.4L335.7 327.3L334.9 327.8L334.6 328.7L334.1 329.4M333.4 327.7L334.9 327.6L336.0 328.6L336.9 329.7L338.2 330.2M329.9 330.5L330.4 331.3L330.7 332.2L331.6 332.7L331.9 333.6M328.5 332.6L329.3 333.5L329.9 334.5L330.3 335.6L330.6 336.7M384.9 356.1L384.5 358.0L382.8 359.2L380.7 359.7L378.5 359.5M384.7 358.0L385.3 358.8L386.2 359.3L386.8 360.2L387.2 361.1M382.5 359.7L381.3 360.7L379.6 360.7L378.0 360.8L376.5 360.2M380.5 362.5L380.7 363.9L380.3 365.3L379.7 366.6L378.3 367.3M377.7 364.4L375.5 365.3L373.8 366.9L373.7 369.1L375.0 370.9M376.4 366.1L378.3 367.2L379.6 368.9L381.3 370.2L383.0 371.6M375.2 368.6L376.1 370.3L378.0 370.9L380.0 371.0L382.0 370.8M374.4 371.6L372.9 373.3L371.7 375.2L372.2 377.3L372.4 379.5M417.3 401.6L418.2 402.2L419.2 402.6L419.7 403.5L420.4 404.3M415.9 404.1L417.0 403.8L417.8 403.0L418.9 402.7L420.1 402.8M415.6 407.4L416.4 407.3L417.1 407.0L417.4 406.3L417.4 405.6M414.4 409.1L413.5 411.1L412.0 412.9L411.7 415.1L413.2 416.8M413.5 412.4L414.1 413.2L414.2 414.2L413.9 415.2L413.2 416.0" stroke-width=".45" stroke="#bfa084"/><path d="M351.1 317.8L350.1 319.1L350.0 320.7L351.0 322.0L350.7 323.6M350.7 319.9L351.3 321.2L352.7 321.6L353.3 322.9L354.4 323.8M352.2 325.2L352.5 326.4L352.5 327.7L353.0 328.8M349.2 322.5L348.7 323.4L348.7 324.4L348.8 325.4L349.6 326.0M348.7 324.4L349.8 325.0L351.0 325.3L351.7 326.3M342.4 324.4L341.2 323.7L339.9 324.1L338.5 324.2M345.9 325.6L346.7 327.3L345.7 328.8L346.1 330.6L346.5 332.4M345.5 327.6L343.5 328.5L341.2 328.4L339.5 327.0L338.0 325.5M341.9 330.4L340.6 330.9L339.3 331.3L337.9 331.8L336.5 331.5M339.3 331.3L338.7 331.7L338.1 332.1L337.8 332.7M338.4 334.8L338.4 335.6L337.8 336.3L337.1 336.8M341.2 333.8L342.3 335.6L342.7 337.7L344.3 339.2L346.0 340.6M333.1 337.2L331.6 337.4L330.4 336.4L329.0 336.0M337.3 335.5L338.8 335.7L340.3 335.2L341.6 334.5L343.0 334.0M340.3 335.2L339.8 336.6L339.5 338.1L340.3 339.4M334.6 337.9L335.6 337.9L336.2 337.2L337.2 336.9L337.9 336.3M336.2 337.2L337.5 337.2L338.8 337.6L339.9 338.3M329.2 342.9L330.0 344.0L331.3 344.7L332.6 345.0M333.2 340.8L332.0 341.8L330.4 342.2L328.9 342.9L327.3 342.8M330.1 343.9L329.6 345.4L328.3 346.5L326.6 346.4L324.8 346.4M326.8 346.4L324.3 346.4L322.2 345.3L319.8 344.8L318.3 343.0M324.9 349.6L324.2 349.7L323.6 350.1L323.2 350.7M324.0 348.3L323.7 349.1L323.4 350.0L322.8 350.7L321.8 350.9M318.4 349.1L317.5 350.1L316.2 350.3L314.9 350.5M321.3 349.9L321.3 351.1L320.3 352.1L320.0 353.3L318.9 354.1M319.6 355.1L318.5 355.4L317.3 355.1L316.2 354.7M318.1 352.3L319.6 353.5L320.9 354.8L322.4 355.9L322.6 357.6M319.3 356.2L319.6 357.0L319.3 357.8L319.5 358.6M316.2 355.9L315.9 356.6L316.1 357.3L315.9 358.0L316.0 358.7M316.1 357.3L315.5 357.8L315.4 358.6L315.3 359.3M311.6 358.7L312.5 359.4L313.1 360.2L313.6 361.1L313.5 362.0M306.0 360.0L305.3 359.4L305.1 358.6L304.4 358.0M308.1 360.5L310.1 361.0L311.9 360.3L313.9 360.7L315.9 360.8M306.0 363.6L305.0 363.7L304.1 363.4L303.3 363.0L302.5 362.5M304.1 363.4L304.8 362.9L305.4 362.5L306.1 362.2M301.3 366.9L301.7 367.6L302.1 368.2L302.1 369.0L302.4 369.7M302.1 368.2L301.8 369.3L302.5 370.2L302.8 371.2M296.2 368.6L295.7 369.1L295.1 369.2L294.4 369.2M298.2 367.9L296.6 368.9L294.9 369.5L293.3 370.2L291.6 369.5M295.8 370.4L293.9 370.2L292.2 369.2L290.4 368.5L289.1 367.2M292.2 369.2L293.3 369.4L294.5 369.3L295.6 369.6M291.6 372.2L290.4 372.9L289.1 373.3L287.6 373.3L286.4 372.6M344.1 334.2L345.8 335.1L347.7 334.5L349.1 333.2L349.0 331.4M347.7 334.5L346.7 334.6L345.7 334.2L344.7 334.6M342.8 337.2L342.9 338.7L342.2 340.1L341.7 341.5L340.2 342.1M341.5 341.1L342.6 342.0L343.9 342.8L345.4 343.0L346.8 343.5M343.9 342.8L342.7 342.5L342.1 341.5L341.9 340.3M340.0 345.9L339.2 346.8L338.2 347.4L336.9 347.6M340.3 344.2L340.4 345.3L339.7 346.1L338.6 346.4L338.0 347.3M339.7 346.1L340.2 347.1L341.2 347.5L342.2 347.9M342.2 349.0L342.7 349.9L342.5 350.9L343.1 351.7M340.7 348.1L342.5 349.2L343.5 350.9L345.4 352.0L347.3 352.8M343.5 350.9L342.6 351.2L341.7 350.7L340.7 350.4M339.0 352.2L339.9 352.5L340.7 352.7L341.4 353.2L342.3 353.5M338.1 355.6L338.9 356.1L339.4 356.9L340.1 357.5L341.1 357.6M332.9 359.3L332.7 360.3L331.9 361.0L331.4 361.9M337.2 358.6L338.1 359.5L339.2 360.3L340.4 360.9L341.8 360.9M334.9 361.5L335.4 362.1L335.8 362.7L336.2 363.3L335.9 364.0M334.8 363.8L333.9 363.9L333.2 364.4L332.4 364.7L331.5 364.7M333.2 364.4L334.3 365.4L334.8 366.7L335.6 368.0M333.8 367.4L332.4 367.0L331.2 366.2L330.7 364.9L331.1 363.7M329.1 370.4L329.0 371.2L328.3 371.6L327.6 372.1M333.9 370.1L335.0 370.5L336.1 370.5L336.8 371.2L337.9 371.3M336.1 370.5L336.9 371.5L338.2 371.8L339.4 371.2M334.4 376.4L335.2 377.5L336.5 378.0L337.9 377.8M335.0 373.5L335.2 374.5L335.8 375.3L336.3 376.1L336.2 377.0M335.8 375.3L335.8 376.8L336.2 378.3L336.6 379.8M333.7 379.1L334.1 380.2L333.5 381.2L332.6 382.0M335.2 376.8L335.8 377.2L336.5 377.6L336.9 378.1L337.0 378.8M327.0 348.9L328.3 349.9L330.0 350.0L331.3 351.0L332.9 351.5M330.0 350.0L331.0 350.2L331.8 350.7L332.7 351.0M326.7 352.0L328.0 352.5L329.4 352.5L330.8 352.5L332.2 352.5M329.4 352.5L328.1 353.2L326.7 353.7L325.6 354.7M326.2 358.1L327.5 358.5L328.1 359.8L328.6 361.1M323.6 356.2L322.3 356.6L321.6 357.6L321.7 358.8L322.7 359.6M318.8 360.0L319.6 360.3L320.3 359.9L321.0 360.2M320.2 358.7L320.2 360.2L319.4 361.5L317.9 362.2L316.6 363.1M319.4 361.5L319.7 362.1L319.7 362.8L319.3 363.3M317.4 362.5L318.7 362.9L319.6 363.9L319.8 365.2L319.6 366.4M319.6 363.9L318.4 364.8L317.4 366.1L316.4 367.3M316.7 369.4L315.7 370.3L315.6 371.5L316.0 372.8M315.8 365.9L315.9 367.7L314.6 369.0L313.8 370.6L313.0 372.3M314.6 369.0L314.0 368.5L313.4 368.0L312.8 367.4M313.8 369.6L312.9 369.5L312.0 369.8L311.0 369.9M316.0 369.2L315.0 369.7L314.6 370.6L315.1 371.4L316.0 371.9M313.2 371.6L312.9 372.2L312.7 372.9L312.9 373.6L313.3 374.2M317.0 375.1L316.2 375.3L315.4 375.3L314.6 375.4M313.7 374.6L313.6 376.3L312.7 377.7L311.2 378.6L309.6 379.6M312.6 378.6L311.5 379.5L310.8 380.7L311.3 382.0L311.2 383.4M309.8 383.9L310.2 385.0L311.3 385.4L312.2 386.2M312.8 382.2L313.1 383.2L313.6 384.1L314.6 384.7L315.7 384.6M333.3 337.2L333.8 338.1L333.5 339.0L332.5 339.6L332.0 340.5M330.5 337.5L332.8 337.1L334.2 335.4L336.2 334.4L337.7 332.9M325.3 342.2L325.8 343.1L326.6 343.6L327.6 343.5M327.8 339.5L328.4 341.1L329.3 342.6L329.8 344.2L329.0 345.8M325.2 342.2L324.1 342.2L323.0 342.2L322.2 342.9M325.4 339.9L325.6 341.1L325.1 342.1L325.5 343.1L326.3 344.0M324.5 342.5L325.0 343.8L324.4 345.1L323.8 346.4M322.5 341.3L323.7 342.5L325.1 343.3L326.3 344.5L326.6 346.0M318.7 344.1L320.5 344.2L322.4 344.1L324.0 344.8L325.1 346.1M314.4 344.2L312.7 344.6L311.5 345.7L311.3 347.3L312.4 348.4M311.5 345.7L312.2 346.6L312.3 347.7L313.1 348.4M308.3 345.5L309.2 345.9L310.1 346.3L311.1 346.2M311.6 345.7L311.0 346.2L310.7 347.0L310.9 347.8L311.5 348.4M308.5 348.7L309.9 349.5L310.0 351.0L311.1 352.0L312.3 353.0M309.2 350.8L309.5 351.4L309.5 352.1L309.1 352.7M307.2 349.8L308.1 350.6L309.2 351.0L310.3 351.3L310.9 352.2M309.2 351.0L309.7 352.5L311.2 353.2L312.8 353.6M303.7 352.2L303.1 353.3L302.6 354.5L301.6 355.4L301.2 356.7M302.6 354.5L303.9 354.5L304.9 353.8L305.5 352.8M371.6 330.3L371.0 330.9L370.6 331.7L370.6 332.6M371.2 328.6L372.0 328.8L372.7 329.1L373.1 329.8L372.8 330.4M372.7 329.1L372.6 330.7L372.1 332.2L371.1 333.5M370.4 328.6L371.4 328.5L372.5 328.3L373.4 327.8M374.3 326.7L375.6 327.2L377.1 327.0L378.5 327.2L379.9 326.8M377.1 327.0L378.1 327.5L379.0 328.1L379.6 329.0M379.6 327.6L380.7 328.0L381.8 328.3L383.0 328.2M376.8 325.1L377.5 325.5L377.8 326.1L377.9 326.8L378.4 327.4M379.9 325.0L378.3 325.8L376.8 326.8L375.5 328.0L374.9 329.6M381.2 323.7L382.6 324.5L384.2 324.4L385.7 323.6M383.8 323.6L384.1 324.6L384.4 325.6L384.9 326.5L385.8 327.2M384.4 325.6L383.6 326.5L382.8 327.4L381.6 327.6M387.1 324.1L384.9 325.0L383.6 326.8L381.9 328.4L380.2 330.0M391.4 327.4L392.6 327.2L393.3 326.3L393.2 325.2M391.6 325.1L393.4 324.5L395.2 323.7L397.2 323.7L399.2 323.7M395.2 323.7L394.7 325.1L394.8 326.7L394.9 328.2M394.3 327.5L392.8 327.8L391.3 327.9L389.8 328.1M396.8 326.4L395.0 326.9L393.2 326.6L391.6 327.3L390.1 328.3M401.7 326.3L400.9 327.0L400.3 327.9L399.2 328.0M399.6 326.4L398.8 326.2L398.0 326.4L397.7 327.1L397.7 327.9M402.1 329.2L402.1 330.7L402.6 332.0L403.4 333.3M403.4 328.1L401.4 328.7L399.6 329.7L397.6 330.0L395.5 330.2M409.7 328.7L410.0 329.4L410.6 329.7L411.1 330.1M407.7 328.5L408.5 329.2L409.5 329.8L410.6 330.0L411.5 329.3M409.5 329.8L409.0 330.7L409.1 331.7L409.3 332.6M410.6 327.2L411.7 327.8L412.7 328.5L413.8 328.9M412.4 328.4L410.7 327.1L408.8 325.9L408.0 324.1L408.0 322.0M408.8 325.9L409.5 325.5L409.7 324.7L409.6 323.8M414.3 329.0L413.4 330.2L412.1 330.9L411.0 331.9M415.1 327.0L413.0 327.3L411.3 326.0L409.1 325.9L407.7 324.5M411.3 326.0L410.4 326.1L410.0 326.9L409.4 327.6M419.8 326.2L419.5 327.3L419.5 328.4L420.4 329.2L421.5 329.8M427.2 329.2L428.2 329.5L429.3 329.7L430.4 329.8M424.7 326.4L424.3 327.8L424.7 329.3L424.1 330.7L423.9 332.2M428.5 326.4L429.3 327.2L429.1 328.3L429.4 329.4L430.2 330.2M429.1 328.3L428.3 328.1L427.5 328.2L426.7 328.0M431.2 325.8L432.9 327.1L434.7 328.2L436.1 329.8L437.6 331.2M434.7 328.2L435.5 329.2L436.3 330.2L437.6 330.2M431.7 328.7L430.4 329.2L429.0 329.1L428.1 327.9M433.5 326.5L435.4 327.6L435.6 329.7L435.9 331.7L437.2 333.4M430.9 329.8L430.0 330.9L428.7 331.3L427.4 331.8M435.4 328.8L436.3 330.7L438.0 332.1L439.2 333.8L441.4 334.2M437.2 329.7L435.9 331.2L435.0 333.0L435.7 334.8L437.6 335.6M435.0 333.0L434.4 334.3L434.5 335.8L435.0 337.2M438.9 332.7L437.7 334.2L436.0 335.3L434.5 336.5L434.7 338.3M436.0 335.3L437.1 336.0L438.0 336.9L438.6 338.1M439.3 335.7L439.6 336.9L438.7 337.9L437.6 338.5L436.2 338.6M438.7 337.9L439.8 338.2L440.7 338.8L441.6 339.3M440.6 338.4L442.2 339.0L443.1 340.3L444.6 341.3L445.1 342.8M374.8 342.6L374.7 343.4L374.4 344.1L374.0 344.7M376.8 341.8L375.6 342.0L374.5 341.9L373.5 341.2L372.3 341.2M374.5 341.9L375.5 343.0L375.5 344.5L376.6 345.5M380.2 341.9L381.9 341.5L382.8 340.1L383.7 338.8L384.1 337.3M384.6 343.8L383.9 343.7L383.2 344.0L382.5 343.7M381.9 344.5L381.5 345.8L380.3 346.6L378.9 346.3L377.4 346.2M380.3 346.6L381.2 347.7L381.6 349.2L382.8 350.1M384.9 347.2L386.1 346.5L386.9 345.3L386.6 344.0L387.4 342.9M386.9 345.3L386.1 346.4L384.8 346.5L383.4 346.5M390.5 353.5L391.0 354.5L391.6 355.4L392.4 356.3M388.8 349.6L390.6 348.4L392.4 347.4L394.4 346.4L396.1 345.2M392.4 347.4L393.5 347.3L394.5 347.3L395.4 346.7M391.0 353.0L389.6 352.9L388.3 353.1L387.1 353.8L385.8 354.2M393.9 357.9L395.0 358.8L395.3 360.3L395.8 361.6M392.9 355.2L394.8 355.4L395.8 356.9L395.7 358.7L396.2 360.4M395.8 356.9L394.4 357.4L393.8 358.7L392.6 359.5M395.3 358.7L395.5 360.3L394.9 361.8L394.6 363.4L393.8 364.7M396.5 360.2L396.9 360.9L397.0 361.7L397.6 362.2M398.2 360.5L400.0 361.7L401.6 363.1L403.8 363.2L405.6 362.0M401.6 363.1L400.6 362.4L399.4 362.3L398.1 362.4M402.0 367.6L401.5 368.8L401.0 370.1L400.1 371.1M401.0 363.9L402.9 364.8L404.1 366.4L406.1 367.0L408.0 367.9M404.1 366.4L404.7 367.0L405.2 367.7L405.6 368.4M404.6 366.2L406.3 367.1L408.3 367.3L410.0 368.2L411.5 369.3M408.3 367.3L409.8 367.3L411.1 367.8L412.6 368.2M402.9 368.5L402.5 369.2L401.8 369.6L401.7 370.4M406.1 368.6L404.9 369.8L404.2 371.2L404.6 372.8L403.6 374.1M408.7 371.9L410.5 372.9L411.2 374.7L410.3 376.4L408.8 377.7M411.2 374.7L410.0 375.4L408.6 375.2L407.4 374.5M412.1 375.8L413.3 375.8L414.3 375.4L415.2 374.5M409.8 375.8L411.0 377.5L410.9 379.5L409.4 381.1L407.6 382.4M409.3 380.1L408.3 379.8L407.3 380.0L406.3 380.2M412.4 379.6L411.6 381.3L410.8 383.0L409.8 384.6L409.3 386.4M410.8 383.0L410.2 382.5L409.7 381.9L409.0 381.8M413.7 383.4L415.3 382.4L415.6 380.7L416.1 379.1L417.8 378.3M416.8 385.1L418.2 385.9L419.1 387.1L420.3 388.1L421.5 389.2M419.1 387.1L418.3 388.0L417.3 388.7L417.0 389.9M418.2 389.9L417.6 392.0L417.0 394.1L416.1 396.1L414.5 397.7M421.5 397.9L421.0 399.5L421.8 400.9L421.7 402.5M419.8 393.9L418.6 395.0L417.1 395.6L415.5 395.3L414.2 396.3M417.1 395.6L415.4 395.7L413.8 396.0L412.4 396.8M422.0 399.6L421.9 400.8L421.1 401.6L420.9 402.7M421.7 398.3L422.8 398.8L423.5 399.6L424.4 400.3L425.6 400.5M426.2 404.7L426.5 406.1L426.1 407.4L425.6 408.7M423.9 402.8L425.9 402.4L427.5 401.2L428.8 399.8L430.9 399.8M427.5 401.2L426.8 402.6L426.4 404.2L427.1 405.6M426.2 406.9L424.7 407.2L424.0 408.5L423.3 409.8L422.9 411.2M424.0 408.5L423.4 409.1L422.6 409.2L422.0 408.6M424.3 410.0L424.9 411.3L425.0 412.6L424.1 413.6M426.8 410.6L427.8 411.4L429.2 411.9L429.8 413.0L431.1 413.4M429.2 411.9L429.7 412.3L430.4 412.5L431.0 412.1M426.2 416.4L426.9 416.6L427.4 417.2L427.4 417.9M427.6 413.7L427.9 414.6L428.1 415.5L428.6 416.3L428.6 417.2M428.6 415.9L430.6 415.7L431.9 414.2L432.0 412.3L431.0 410.7M429.3 420.4L430.0 420.5L430.5 420.2L430.9 419.6M427.9 419.8L427.5 421.0L426.8 422.1L426.5 423.3L426.5 424.6M377.9 353.3L377.7 354.6L376.6 355.4L375.4 356.3L374.2 357.1M376.6 355.4L375.7 356.2L375.4 357.4L375.8 358.5M379.7 356.7L378.9 358.5L377.1 359.7L375.9 361.2L375.6 363.2M380.9 360.1L380.3 360.7L380.2 361.5L379.5 361.9L378.7 361.9M380.2 361.5L380.9 362.6L380.4 363.9L379.7 365.1M383.3 363.4L382.2 365.3L381.2 367.2L380.6 369.3L380.6 371.5M381.2 367.2L382.6 367.3L384.0 367.7L385.1 368.7M383.4 366.0L382.3 365.4L382.0 364.2L381.2 363.2L381.5 362.0M380.2 371.8L379.1 372.3L377.9 372.4L376.8 372.9M383.5 369.6L385.3 369.9L387.0 369.6L388.1 368.4L387.8 366.8M387.0 369.6L386.5 371.2L386.2 372.7L386.2 374.4M380.7 374.4L379.2 375.4L377.3 375.2L375.6 375.7L373.8 376.1M379.2 379.9L378.7 381.2L377.7 382.1L376.4 382.8M379.5 378.2L378.7 379.4L379.0 380.7L379.4 382.1L378.5 383.2M378.4 381.4L378.4 382.8L377.9 384.1L377.1 385.2M376.7 381.5L376.2 382.0L376.1 382.8L376.6 383.3L377.2 383.9M376.1 382.8L377.1 383.0L378.0 382.4L379.1 382.7M371.5 383.9L372.6 384.9L373.9 385.7L375.4 386.2M374.3 382.6L373.1 382.4L372.1 381.9L371.0 381.4L369.8 381.2M372.1 381.9L372.0 382.8L372.1 383.8L372.5 384.7M372.3 385.7L370.3 386.2L368.2 386.1L366.3 385.2L364.2 385.0M370.1 388.7L370.5 390.9L370.0 393.0L371.5 394.8L373.2 396.3M368.8 391.4L370.0 392.5L370.4 394.0L371.1 395.5L371.5 397.0M365.8 393.1L364.9 392.7L363.9 392.6L363.1 392.1L362.9 391.2M363.9 392.6L363.7 393.7L364.1 394.8L364.3 396.0M364.0 395.6L362.8 396.7L361.5 397.6L359.9 397.4L358.2 397.6M364.0 399.8L365.1 400.1L366.3 400.2L367.5 400.5M362.1 398.2L362.7 399.3L362.2 400.4L362.4 401.5L363.2 402.5M362.2 400.4L363.4 401.3L364.8 401.7L366.2 402.1M359.9 399.3L361.9 400.3L363.9 401.3L366.1 401.7L368.4 401.8M352.7 404.1L351.7 404.3L350.8 404.6L349.8 404.4M355.3 402.0L354.1 403.3L353.2 404.8L351.8 406.0L351.2 407.7M350.9 404.8L353.1 405.4L355.1 406.2L357.2 405.6L358.2 403.8M355.1 406.2L354.0 405.5L352.8 405.7L352.0 406.7M348.5 403.6L348.5 404.6L348.7 405.5L349.2 406.3M345.6 405.9L346.8 406.3L347.9 405.7L348.7 404.9L349.7 404.1M347.9 405.7L349.3 406.2L350.8 406.6L352.3 406.6M366.9 361.6L364.9 360.5L362.6 360.9L360.7 362.1L358.4 361.7M364.3 364.0L365.3 363.9L366.3 363.9L367.2 363.4L368.1 363.0M361.8 366.5L361.4 367.4L360.8 368.3L360.5 369.2L360.1 370.2M362.2 369.4L361.4 370.4L360.4 371.1L359.7 372.1M360.0 369.3L358.0 369.5L356.8 370.9L357.1 372.7L356.4 374.4M356.8 370.9L357.5 370.9L358.2 370.9L358.6 371.4M358.1 372.1L359.8 371.9L361.3 372.7L363.0 372.8L364.6 373.5M361.3 372.7L362.1 374.2L363.3 375.2L363.5 376.8M356.5 375.4L354.6 375.1L352.7 375.2L350.9 374.6L349.1 374.0M352.7 375.2L352.7 376.2L353.4 377.0L354.5 376.9M351.4 378.0L350.9 379.0L350.2 380.0L350.1 381.1M353.5 376.5L355.5 376.2L357.3 377.0L359.2 376.4L360.4 375.0M357.3 377.0L356.0 377.1L354.8 376.6L353.9 375.6M351.6 379.2L352.5 379.5L353.0 380.1L353.3 380.9L353.0 381.7M353.0 380.1L353.9 380.0L354.5 379.2L354.6 378.3M351.2 383.5L351.2 384.8L352.3 385.7L353.2 386.7L354.5 387.2M352.3 385.7L353.8 386.0L355.4 386.0L356.9 386.1M348.9 386.1L350.2 385.8L351.4 386.1L352.3 386.8L352.9 387.8M348.7 390.6L347.3 390.9L346.2 390.2L345.8 389.0L345.6 387.8M391.7 332.9L390.2 333.0L388.7 333.4L387.4 334.2M388.3 330.2L388.1 331.3L388.1 332.5L387.6 333.6L387.9 334.7M387.3 332.2L386.2 332.8L385.0 332.5L383.9 333.0M389.4 331.8L390.1 332.0L390.7 332.5L391.0 333.2L391.3 333.9M393.7 334.6L394.8 334.1L395.9 333.8L397.1 334.1M392.8 333.3L393.0 334.2L392.7 335.0L392.0 335.6L391.2 336.0M392.1 334.4L393.2 334.0L394.3 333.7L395.4 333.5M395.8 335.2L396.3 335.8L396.7 336.5L396.8 337.3L396.2 337.8M399.3 340.1L400.0 341.1L399.6 342.1L400.1 343.2M398.2 337.6L398.2 338.4L398.7 339.1L399.6 339.3L400.5 339.4M400.0 342.8L399.4 343.7L399.5 344.9L398.9 345.8M401.0 340.2L400.2 340.5L399.8 341.2L399.4 341.9L398.8 342.5M399.8 341.2L399.1 341.9L398.2 342.3L397.7 343.1M407.3 343.2L407.4 344.4L406.6 345.2L406.4 346.3M404.1 341.9L403.3 342.2L402.5 341.8L401.8 341.4L401.0 341.1M408.6 344.9L407.5 345.2L406.6 345.9L406.2 346.9L405.4 347.7M409.4 349.0L410.7 349.8L411.8 350.8L413.1 351.6M409.6 346.4L409.1 347.3L408.5 348.1L408.5 349.0L408.2 349.9M412.3 348.8L413.2 349.8L413.8 351.1L414.6 352.1L415.8 353.0M410.8 351.8L411.5 353.1L412.6 354.1L413.9 354.8M414.6 351.5L415.4 352.0L415.7 352.8L416.5 353.3L417.5 353.5M417.6 356.7L419.0 356.8L420.3 357.1L421.3 358.2M413.4 355.0L414.5 355.4L415.4 355.0L416.5 355.1L417.6 355.4M415.4 355.0L416.0 356.1L417.2 356.4L418.5 356.6M413.3 361.6L412.6 362.0L412.3 362.7L412.6 363.4M411.8 357.8L411.2 358.5L410.5 359.2L409.5 359.3L408.7 358.7M408.3 362.9L407.8 364.2L407.1 365.4L405.9 366.1M411.1 361.7L410.8 362.5L411.1 363.2L411.9 363.6L412.1 364.4M411.1 363.2L411.2 364.3L411.7 365.3L411.7 366.5M393.9 363.8L393.3 364.9L392.1 365.6L390.7 365.2L389.4 365.5M392.1 367.3L391.2 368.4L390.6 369.8L390.8 371.2L390.6 372.6M392.0 371.2L391.1 372.1L390.9 373.2L391.7 374.2L392.7 374.9M390.9 373.2L391.6 373.2L392.2 373.7L392.3 374.5M390.2 376.5L391.2 376.9L392.2 376.6L393.2 376.7L394.2 376.3M389.8 381.9L390.0 382.9L389.7 383.8L389.8 384.8M390.2 380.3L388.0 381.2L385.8 380.3L385.0 378.3L383.1 377.1M387.8 384.0L388.5 386.0L389.1 388.1L391.1 389.1L393.4 389.3M389.1 388.1L389.2 389.7L388.4 391.1L388.9 392.6M389.3 388.8L389.0 389.8L389.1 390.9L390.0 391.5M385.5 387.9L384.8 389.0L384.4 390.1L384.5 391.3L385.6 392.1M384.4 390.1L385.2 390.2L385.9 390.2L386.5 389.7M383.6 392.3L383.7 393.8L383.2 395.1L382.6 396.5L381.4 397.4M358.3 329.3L358.6 330.0L358.5 330.8L359.1 331.4L359.0 332.2M358.6 330.8L358.5 331.7L359.0 332.5L359.7 333.1M356.1 332.1L356.7 333.5L357.0 334.8L356.2 336.0L354.6 336.4M353.5 337.7L352.9 338.4L353.0 339.4L353.5 340.2M354.7 335.9L354.9 337.9L356.1 339.6L358.0 340.6L359.2 342.3M354.0 337.9L353.3 339.2L352.5 340.5L351.4 341.6L350.7 342.9M352.5 342.2L350.2 342.1L348.0 341.7L346.1 342.7L343.9 343.0M351.5 346.7L351.3 348.5L350.4 350.0L349.9 351.7L349.0 353.2M350.4 350.0L349.0 349.7L347.6 349.5L346.3 350.0M351.3 353.0L352.1 353.4L352.6 354.1L352.6 355.0M349.9 350.0L349.1 350.2L348.3 350.3L347.6 350.1L346.9 349.8M348.3 350.3L348.5 351.0L349.1 351.4L349.6 352.0M349.8 354.8L349.7 355.5L349.5 356.2L348.8 356.6L348.1 356.8M349.5 356.2L350.9 356.5L351.6 357.9L352.0 359.3M344.2 356.7L343.8 357.6L343.7 358.7L343.9 359.6M348.1 358.1L347.8 358.9L347.8 359.7L348.3 360.4L348.7 361.2M347.8 359.7L346.8 359.5L345.8 359.8L344.9 360.1M346.7 362.5L348.4 362.5L350.0 362.2L351.4 361.3L353.1 361.3M346.0 366.4L343.5 366.4L341.5 367.7L339.3 368.8L336.9 369.4M412.0 331.6L413.8 332.4L415.6 331.6L417.6 331.7L419.1 330.5M414.9 333.8L413.7 335.2L412.0 336.1L410.1 336.3L408.4 337.1M415.0 339.6L414.7 340.5L415.2 341.4L415.0 342.4M415.2 337.0L413.2 338.3L412.8 340.5L413.9 342.5L416.2 343.2M418.6 343.0L418.9 344.0L418.3 344.9L418.1 346.0M417.6 338.8L417.0 340.3L417.9 341.6L418.5 343.0L417.9 344.4M417.9 341.6L417.2 342.1L416.3 342.1L415.4 341.7M418.9 343.8L420.3 344.3L421.9 344.4L423.0 343.2M419.6 342.2L419.1 343.3L418.8 344.5L419.3 345.7L419.9 346.8M421.4 347.1L420.7 347.8L419.9 348.0L419.5 348.8M421.7 345.6L420.8 346.9L419.1 347.2L417.5 347.0L415.9 347.5M419.1 347.2L419.1 348.2L419.7 348.9L420.0 349.8M425.5 350.7L424.8 350.4L424.4 349.7L423.7 349.2M424.7 349.6L425.4 349.0L426.4 348.8L427.4 348.8L428.3 348.8M426.4 348.8L426.6 349.6L426.6 350.4L426.4 351.2M426.2 356.6L424.9 356.4L423.5 356.3L422.6 355.3M426.7 352.8L424.5 352.7L422.5 353.6L420.9 355.0L420.9 357.0M399.6 372.7L399.4 373.4L399.0 374.1L398.8 374.8M399.6 371.2L401.1 370.8L401.9 369.6L401.6 368.2L401.1 366.9M401.9 369.6L400.6 369.4L399.4 369.1L398.2 369.6M400.4 378.5L399.6 379.7L398.6 380.8L398.1 382.3M398.7 374.8L400.4 374.8L401.6 375.9L403.3 376.2L405.0 375.8M401.6 375.9L402.7 376.9L404.2 377.1L405.3 376.1M397.8 378.0L399.6 378.9L400.5 380.6L400.7 382.4L399.6 384.0M400.5 380.6L399.5 381.3L398.3 381.7L397.3 382.4M398.9 380.7L398.4 381.5L397.5 381.7L396.7 381.4M397.4 380.3L395.1 381.0L392.9 380.0L390.9 378.6L389.3 377.0M392.9 380.0L393.8 380.8L394.5 381.9L394.4 383.1M396.2 383.2L395.9 384.8L395.1 386.3L394.1 387.6L393.0 388.9M395.1 386.3L395.6 387.3L395.3 388.3L395.3 389.4M398.1 391.0L398.9 391.3L399.7 390.9L400.5 390.6M397.7 388.1L399.1 389.3L400.2 390.6L401.3 392.0L402.1 393.5M400.2 390.6L401.0 391.7L401.2 393.1L401.3 394.4M395.2 389.2L395.0 390.6L393.8 391.4L392.5 391.0M398.7 390.0L398.2 392.2L398.2 394.5L399.9 396.1L402.4 396.0M400.1 393.2L399.6 394.9L400.5 396.4L400.8 398.1L400.4 399.8M400.5 396.4L399.6 397.2L398.7 397.9L398.0 398.8M411.4 391.7L413.0 392.2L414.6 392.8L415.6 394.0L416.4 395.4M414.6 392.8L413.5 393.4L412.4 394.0L411.1 393.8M413.1 393.8L413.9 394.8L414.4 396.0L415.0 397.1M409.4 394.0L408.5 395.8L406.4 396.3L404.2 396.6L402.3 397.5M406.4 396.3L405.4 396.9L404.9 397.8L403.8 398.2M410.2 396.6L408.8 398.4L409.1 400.5L407.4 402.1L407.6 404.2M409.1 400.5L408.9 401.4L409.3 402.3L409.7 403.2M409.3 401.1L408.1 400.4L407.1 399.5L407.0 398.2M409.3 399.8L409.0 400.8L408.6 401.8L409.1 402.8L408.7 403.7M408.6 401.8L409.1 402.9L409.9 403.7L410.6 404.6M408.9 404.7L407.0 405.5L405.4 406.7L403.4 406.3L401.3 406.1M396.0 332.3L394.8 333.4L394.1 334.8L393.2 336.1M400.3 330.6L400.2 331.9L401.3 332.8L402.4 333.6L403.5 334.4M401.3 332.8L400.8 333.5L400.7 334.5L400.5 335.3M401.5 336.6L401.5 337.6L401.5 338.6L401.1 339.4M401.2 333.3L403.0 332.9L404.4 331.9L404.8 330.2L403.6 328.9M404.7 334.8L405.6 335.5L406.0 336.4L406.9 337.1L407.8 337.8M406.9 337.1L406.9 338.8L406.5 340.4L406.3 342.1L405.1 343.4M405.6 335.4L406.9 335.3L408.2 335.4L409.5 335.6M409.9 337.4L410.1 338.7L410.8 339.9L411.0 341.2L410.2 342.4M410.8 339.9L411.5 340.7L412.0 341.7L412.1 342.8M413.7 341.6L415.1 343.0L416.4 344.6L417.7 346.3L419.3 347.6M416.4 344.6L416.3 345.8L416.9 346.7L416.7 347.9M414.5 346.0L413.3 345.5L412.6 344.4L411.3 343.8M416.9 343.2L417.1 344.0L417.3 344.8L416.9 345.6L417.0 346.4M422.4 345.8L421.0 345.9L419.8 345.1L418.4 345.1M420.1 346.4L420.9 347.7L420.3 349.2L419.2 350.4L419.5 351.9M422.9 350.9L423.3 352.0L423.6 353.1L424.4 353.9M423.9 349.2L424.9 349.1L425.9 349.1L426.7 349.5L427.7 349.7M425.1 354.9L424.1 355.8L422.8 356.2L422.0 357.3M426.2 351.8L427.1 352.8L428.2 353.6L429.6 353.7L431.0 353.5M428.2 353.6L427.2 353.9L426.3 354.3L425.3 353.8M429.3 353.3L430.7 353.2L432.0 353.4L433.1 352.5L434.4 352.1M432.0 353.4L431.6 354.4L431.0 355.4L431.0 356.5M430.6 358.4L431.8 359.5L433.4 359.8L435.0 360.3M432.0 356.8L432.5 358.9L433.8 360.7L434.1 362.9L434.4 365.0M435.0 361.6L435.7 361.9L436.1 362.4L436.8 362.6M434.1 360.3L435.9 359.5L436.8 357.8L437.7 356.2L437.9 354.4M436.8 363.9L438.2 364.4L439.7 364.1L440.5 363.0L442.0 362.7M367.8 372.8L366.1 372.6L364.6 373.5L363.3 374.4L361.8 375.1M364.6 373.5L364.0 374.2L363.7 375.2L363.5 376.2M369.1 376.3L367.9 375.8L367.1 374.8L367.3 373.6M366.0 375.4L365.8 376.7L366.8 377.7L367.8 378.6L369.2 379.0M365.6 379.2L365.0 380.6L364.6 382.0L365.2 383.3L366.4 384.2M365.0 381.8L366.4 382.5L368.1 382.4L369.5 381.7L370.2 380.4M368.1 382.4L369.3 382.9L370.6 382.9L371.5 383.9M363.6 385.3L363.8 386.1L363.6 386.8L363.2 387.5L363.4 388.3M363.1 388.6L363.9 388.8L364.5 389.3L364.9 390.0L365.6 390.4M364.5 389.3L363.0 389.5L361.8 390.5L360.4 390.8M360.9 391.8L360.9 392.9L360.1 393.8L358.9 393.8L357.9 393.1M360.0 393.6L359.8 395.0L358.9 396.1L357.8 397.0L356.3 397.0M358.9 396.1L357.6 397.0L357.5 398.5L357.0 400.0M345.3 323.1L346.1 322.3L346.1 321.2L346.3 320.1M346.1 321.7L346.8 323.1L347.4 324.6L347.9 326.0L348.9 327.2M347.4 324.6L348.5 324.8L349.6 325.3L350.4 326.1M344.5 321.4L342.8 321.2L341.9 320.0L341.8 318.5L341.3 317.0M341.9 320.0L342.0 320.8L342.6 321.2L343.1 321.9M340.6 327.4L342.1 327.3L343.1 326.1L344.6 326.1M341.6 323.2L342.6 324.9L341.8 326.7L342.6 328.4L343.4 330.2M342.8 324.0L341.2 323.9L339.6 323.7L338.3 324.6M338.2 324.3L336.5 324.5L334.9 324.5L333.3 324.2L331.8 324.8M334.9 324.5L336.0 324.3L336.8 325.0L337.9 324.9M335.8 326.4L336.9 327.1L337.7 328.1L338.7 328.9L339.5 329.9M336.0 328.6L336.9 327.8L337.1 326.6L337.4 325.5M333.4 327.7L333.1 328.7L333.2 329.7L332.9 330.6L333.4 331.5M330.7 332.2L331.0 332.9L330.6 333.6L330.7 334.3M329.9 330.5L331.0 331.6L332.7 331.9L334.3 331.4L336.0 331.2M332.7 331.9L333.7 332.8L334.1 334.1L333.6 335.4M329.9 334.5L330.7 334.5L331.4 334.5L332.0 334.1M328.5 332.6L327.2 334.5L324.8 334.9L322.4 334.8L320.8 336.4M324.8 334.9L325.7 335.2L326.7 335.1L327.2 334.3M384.9 356.1L383.2 357.6L381.2 358.7L379.0 359.5L376.8 360.3M386.2 359.3L387.4 359.9L388.3 360.8L389.2 361.7M384.7 358.0L385.4 359.6L387.1 360.4L388.7 361.5L389.9 362.9M382.5 359.7L382.1 361.9L382.9 364.1L384.7 365.6L385.3 367.8M380.5 362.5L382.9 362.3L385.3 362.6L387.4 363.7L389.8 364.2M385.3 362.6L384.1 361.8L382.6 362.0L381.2 361.9M373.8 366.9L374.2 367.8L375.1 368.2L375.9 368.9M377.7 364.4L376.9 364.9L376.0 364.6L375.0 364.6L374.1 364.5M376.4 366.1L377.2 366.4L377.5 367.2L378.2 367.7L379.1 367.7M377.5 367.2L376.3 367.6L375.9 368.8L376.1 370.0M378.0 370.9L378.5 371.4L378.5 372.2L378.3 372.9M375.2 368.6L374.2 368.7L373.3 368.9L372.4 368.6L371.5 368.2M371.7 375.2L372.0 376.2L371.5 377.1L371.8 378.1M374.4 371.6L376.1 371.6L377.5 372.4L378.5 373.6L380.1 373.9M417.3 401.6L418.2 403.0L419.3 404.2L419.8 405.7L421.3 406.5M419.3 404.2L420.1 404.7L421.1 404.6L422.0 404.7M415.9 404.1L417.0 404.2L418.1 404.3L418.9 404.9L419.2 405.8M417.1 407.0L416.5 407.6L416.2 408.4L415.6 409.0M415.6 407.4L417.1 407.2L418.4 406.5L419.8 406.8L421.0 407.7M414.4 409.1L412.7 410.4L410.4 410.7L408.6 411.9L406.4 411.3M414.2 414.2L413.3 414.0L412.4 413.6L411.5 413.3M413.5 412.4L412.0 414.1L410.9 415.9L408.7 416.8L407.5 418.7M410.9 415.9L411.3 416.5L412.1 416.4L412.6 416.9" stroke-width=".35" stroke="#a88c72"/></g>
<rect x="360.500" y="257" width="84" height="47" fill="#d3b99d" stroke="#6a3036" stroke-width="1"/>
<rect x="361" y="257.500" width="83" height="46" filter="url(#sand)"/>
<rect x="361" y="272" width="83" height="14.500" fill="#4a3b34"/><rect x="361" y="271.600" width="83" height=".9" fill="#c9b24a"/><rect x="361" y="286" width="83" height=".9" fill="#c9b24a"/>
<text x="402.500" y="278.200" text-anchor="middle" font-family="Liberation Sans, sans-serif" font-weight="bold" font-size="4.900" fill="#fff">IDEAL CROPS TO GROW IN</text>
<text x="402.500" y="284.500" text-anchor="middle" font-family="Liberation Sans, sans-serif" font-weight="bold" font-size="4.900" fill="#fff">SANDY LOAM SOIL</text>
</svg>
<div class="abs" style="left:69px;top:31.600px;width:204px;text-align:center;font-family:'Liberation Serif',serif;font-size:12.170px;line-height:14.700px;color:#141414;white-space:nowrap">Garden soil is considered the ideal<br>type of soil for gardening and<br>agricultural uses because it retains<br>nutrients well and retains water while<br>still allowing excess water to drain<br>away. (Loam texture)</div></div>
<!-- right side -->
<div class="abs" style="left:533px;top:56px;width:1px;height:360px;background:#2c2b2e"></div>
<span class="t" style="left:543px;top:54px;font-size:11.350px;color:#b9b9b9">Sonraki slayt</span>
<div id="next" class="abs" style="left:543px;top:72.5px;width:227px;height:127.500px;background:#fff;overflow:hidden"><svg style="left:0;top:0" width="227" height="128" viewBox="548 166.500 227 128">
<defs>
<filter id="soil2" x="0" y="0" width="100%" height="100%" color-interpolation-filters="sRGB"><feTurbulence type="fractalNoise" baseFrequency=".6" numOctaves="2" seed="9"/><feColorMatrix values=".45 0 0 0 -.05  .34 0 0 0 -.045  .3 0 0 0 -.04  0 0 0 0 1"/></filter>
<filter id="peb" x="0" y="0" width="100%" height="100%" color-interpolation-filters="sRGB"><feTurbulence type="fractalNoise" baseFrequency=".45" numOctaves="2" seed="5"/><feColorMatrix values=".8 0 0 0 .42  .8 0 0 0 .38  .8 0 0 0 .3  0 0 0 0 1"/></filter>
<filter id="nb" x="-10%" y="-10%" width="120%" height="120%"><feGaussianBlur stdDeviation=".45"/></filter>
<clipPath id="cph"><rect x="630.800" y="191" width="76.700" height="76"/></clipPath>
<clipPath id="cps"><path d="M630 198C640 204 660 200 682 192C692 197 700 208 708 216V250C700 256 694 262 690 268H638L630 262z"/></clipPath>
</defs>
<text x="553.200" y="175.800" font-family="Liberation Serif, serif" font-weight="bold" font-size="5.660" fill="#ee2222">Nowadays we see that the soil is losing its health.</text>
<text x="580.700" y="185.900" font-family="Liberation Serif, serif" font-weight="bold" font-size="5.660" fill="#1fae5e">SOIL HEALTH INTEGRAL TO SUSTAINABLE AGRICULTURE</text>
<g font-family="Liberation Serif, serif" font-size="4.250" fill="#333" text-anchor="middle">
<text x="587" y="215.400">It turns out that it is a key aspect of</text>
<text x="587" y="220.500">agricultural sustainability because soils</text>
<text x="587" y="225.600">are foundational to the food production</text>
<text x="587" y="230.700">system while also providing other</text>
<text x="587" y="235.800">critical services related to water, air and</text>
<text x="587" y="240.900">climate.</text></g>
<g clip-path="url(#cph)">
<rect x="630.800" y="191" width="76.700" height="76" filter="url(#peb)"/>
<g filter="url(#nb)"><path d="M630 198C640 204 660 200 682 192C692 197 700 208 708 216V250C700 256 694 262 690 268H638L630 262z" fill="#2c201c"/></g>
<g clip-path="url(#cps)"><rect x="630.800" y="191" width="76.700" height="77" filter="url(#soil2)"/></g>
<g filter="url(#nb)">
<path d="M630 191h53c-2 5-8 8-14 9c-4 3-10 5-16 5c-8 2-18 0-23-3z" fill="#3f8f25"/>
<path d="M632 192l7 8l5-8l7 10l6-10l6 8l6-9l6 5l6-4l-4 6l-10 5l-14 3l-16-1l-7-5z" fill="#67bf3c"/>
<path d="M636 191l3 5l3-5zM650 191l4 7l3-7zM664 191l3 5l4-5z" fill="#8bd65a"/>
<ellipse cx="667" cy="214.500" rx="3.600" ry="7.500" transform="rotate(-12 667 214.500)" fill="#5cc13a"/>
<ellipse cx="674" cy="215.500" rx="3.400" ry="7" transform="rotate(22 674 215.500)" fill="#6bd048"/>
<ellipse cx="661.500" cy="223" rx="6.500" ry="3.800" transform="rotate(-8 661.500 223)" fill="#55b834"/>
<ellipse cx="678.500" cy="224.500" rx="6.500" ry="3.800" transform="rotate(12 678.500 224.500)" fill="#5bbf39"/>
<ellipse cx="669.500" cy="229.500" rx="4" ry="6" transform="rotate(8 669.500 229.500)" fill="#66ca44"/>
<circle cx="670" cy="222" r="2.500" fill="#4aa82c"/>
</g></g>
<rect x="707.500" y="187.700" width="61.200" height="86.300" fill="#a9c1d9"/>
<rect x="707.500" y="231.500" width="61.200" height="42.500" fill="#2b1b15"/>
<rect x="707.500" y="187.700" width="61.200" height="86.300" fill="none" stroke="#2a2e36" stroke-width=".5"/>
<text x="727.500" y="195" font-family="Liberation Serif, serif" font-size="7.400" fill="#f6f6f6" textLength="34" lengthAdjust="spacingAndGlyphs">soil nutrients</text>
<circle cx="724" cy="192.500" r="1.700" fill="#3a2a22"/><circle cx="711.500" cy="190.500" r="1.500" fill="#5a6a7a"/><rect x="765" y="188.500" width="3" height="3.500" fill="#15171b"/>
<g fill="#eef2f6" stroke="#8a96a4" stroke-width=".3"><path d="M726.500 232c-1-8 0-16-.8-24c-.4-4 .3-8 .3-11" fill="none" stroke="#f4f4f4" stroke-width=".9"/><ellipse cx="722" cy="200" rx="2" ry="3.200" transform="rotate(-20 722 200)"/><ellipse cx="731" cy="200.500" rx="2" ry="3.200" transform="rotate(25 731 200.500)"/><ellipse cx="720.500" cy="208" rx="2.200" ry="3.500" transform="rotate(-30 720.500 208)"/><ellipse cx="732.500" cy="210" rx="2.200" ry="3.500" transform="rotate(30 732.500 210)"/><ellipse cx="721" cy="217" rx="2" ry="3.200" transform="rotate(-25 721 217)"/><ellipse cx="733.500" cy="219" rx="3" ry="3"/><ellipse cx="722.500" cy="225" rx="1.800" ry="3" transform="rotate(-15 722.500 225)"/></g>
<g fill="#f3e6d8" stroke="#8b5a3c" stroke-width=".4"><ellipse cx="752.500" cy="200.700" rx="5" ry="4.300"/><ellipse cx="755" cy="236" rx="4" ry="3.600"/><ellipse cx="763.300" cy="243.200" rx="4.300" ry="4.300"/><ellipse cx="719.200" cy="256.500" rx="6.500" ry="4.300"/></g>
<path d="M754 207l5-2l3 3l5-1l-3 5l-5 2l-4-2z" fill="#d6c06e" stroke="#4a3a20" stroke-width=".4"/><path d="M762 207l6 8" stroke="#4a3a20" stroke-width=".5"/>
<path d="M757.500 229l-6-1.500l5-1.500l-3-4.500l4.500 2.500l1-5l1.500 5l4.500-2.500l-3 4.500l5 1.500l-6 1.500z" fill="#f2b21c"/><circle cx="752" cy="223.500" r="1.200" fill="#e0402a"/>
<g><circle cx="711.500" cy="239" r="1.700" fill="#e8d23a"/><circle cx="719.500" cy="237.500" r="1.700" fill="#7ac24a"/><circle cx="724.500" cy="239.500" r="1.700" fill="#d88ab0"/><circle cx="729.500" cy="238" r="1.700" fill="#9a7ad0"/><circle cx="734" cy="237" r="1.700" fill="#8a9ad8"/><circle cx="738.500" cy="239" r="1.700" fill="#e07a4a"/><circle cx="743" cy="241.500" r="1.700" fill="#a87ad0"/><circle cx="711" cy="244" r="1.700" fill="#6a8ad8"/><circle cx="715.500" cy="242" r="1.700" fill="#7a8ae0"/><circle cx="721" cy="243.500" r="1.700" fill="#c86ac0"/><circle cx="728.500" cy="244" r="1.700" fill="#3ab88a"/><circle cx="734.500" cy="242.500" r="1.700" fill="#5ac0c8"/><circle cx="715.500" cy="247.500" r="1.700" fill="#a8d04a"/><circle cx="723" cy="248" r="1.700" fill="#e8923a"/><circle cx="711.500" cy="250" r="1.700" fill="#d8a03a"/></g>
<rect x="728.700" y="249.800" width="15.500" height="21.700" fill="#8fd4a4"/><rect x="728.700" y="249.800" width="15.500" height="7" fill="#86cc4e"/><rect x="728.700" y="256.800" width="15.500" height="7" fill="#9ad672"/><rect x="728.700" y="263.800" width="15.500" height="7.700" fill="#a6dcc6"/>
<g fill="#f2cf1e"><rect x="741" y="250" width="18" height="2.200" rx="1"/><rect x="741" y="256.800" width="18.500" height="2.200" rx="1"/><rect x="740" y="264.300" width="19" height="2.200" rx="1"/></g>
<g fill="#c9a27a" stroke="#5a3a28" stroke-width=".3"><circle cx="748.300" cy="238.500" r="1.500"/><rect x="747" y="240" width="2.600" height="4" rx=".8"/><circle cx="764.200" cy="250" r="1.500"/><rect x="762.900" y="251.500" width="2.600" height="4" rx=".8"/><circle cx="721.700" cy="263.500" r="1.500"/><rect x="720.400" y="265" width="2.600" height="4" rx=".8"/></g>
<rect x="709.500" y="267" width="4" height="4" fill="#1d4fa0"/><rect x="764.500" y="268" width="2.500" height="3" fill="#b03a2a"/>
<text x="666" y="282.300" text-anchor="middle" font-family="Liberation Serif, serif" font-weight="bold" font-size="6.600" fill="#222">Healthy plants grow in healthy soil</text>
<rect x="610" y="284.700" width="113" height="6.600" fill="#ffee22"/>
<text x="666.500" y="289.600" text-anchor="middle" font-family="Liberation Serif, serif" font-size="3.800" fill="#e03a2a">this sentence not be forgotten</text>
</svg></div>
<div class="abs" style="left:543px;top:210px;width:227px;height:1px;background:#343336"></div>
<span class="t" style="left:543px;top:221.5px;font-size:13.900px;color:#b8b8b8">Not Yok.</span>
<!-- tools -->
<svg style="left:31px;top:354px" width="30" height="28" viewBox="36 448 30 28"><path d="M61.500 451.500L46 467.500" stroke="#b4b4b4" stroke-width="4.400" stroke-linecap="round"/><path d="M45.500 466.500L40.500 471.500" stroke="#b4b4b4" stroke-width="2.800" stroke-linecap="round"/><path d="M40.500 471.500L39 473" stroke="#b4b4b4" stroke-width="1.400" stroke-linecap="round"/><path d="M48 464L50 466" stroke="#1e1d1f" stroke-width=".8"/></svg>
<svg style="left:76px;top:355px" width="26" height="26" viewBox="81 449 26 26"><g fill="#b4b4b4"><rect x="81.800" y="450" width="7.500" height="8.500"/><rect x="91" y="450" width="8.500" height="5.500"/><rect x="81.800" y="460" width="5.500" height="9"/></g><rect x="89.600" y="457.800" width="15.800" height="15.200" fill="#1e1d1f" stroke="#b4b4b4" stroke-width="2"/></svg>
<svg style="left:119px;top:355px" width="28" height="28" viewBox="124 449 28 28"><circle cx="134.600" cy="459.300" r="7.200" fill="none" stroke="#b4b4b4" stroke-width="2.300"/><path d="M140 464.700L147.500 472.200" stroke="#b4b4b4" stroke-width="3.200" stroke-linecap="round"/></svg>
<svg style="left:162px;top:354px" width="30" height="28" viewBox="167 448 30 28"><path d="M169 450.200H193" stroke="#b4b4b4" stroke-width="1.300" stroke-dasharray="1.500 1"/><path d="M169.600 450V467" stroke="#b4b4b4" stroke-width="1.300" stroke-dasharray="1.500 1"/><path d="M193.800 450.500L169 468" stroke="#b4b4b4" stroke-width="1.300"/><path d="M193 452V467.500H172" fill="none" stroke="#b4b4b4" stroke-width="2"/><rect x="179.500" y="468" width="4" height="4" fill="#b4b4b4"/><rect x="175" y="471.800" width="13" height="2.200" fill="#b4b4b4"/></svg>
<svg style="left:207px;top:355px" width="27" height="27" viewBox="212 449 27 27"><circle cx="225.500" cy="462.200" r="11.800" fill="none" stroke="#b4b4b4" stroke-width="1.700"/><circle cx="220.300" cy="462.200" r="1.500" fill="#b4b4b4"/><circle cx="225.500" cy="462.200" r="1.500" fill="#b4b4b4"/><circle cx="230.700" cy="462.200" r="1.500" fill="#b4b4b4"/></svg>
<!-- nav circles -->
<svg style="left:195px;top:396px" width="170" height="24" viewBox="200 490 170 24"><circle cx="220.500" cy="509" r="14.800" fill="none" stroke="#b0b0b0" stroke-width="1.600"/><circle cx="343" cy="509" r="14.800" fill="none" stroke="#b0b0b0" stroke-width="1.600"/></svg>
<span class="t" style="left:245px;top:408px;font-size:11px;color:#8a8a8a">Slayt 16 / 77</span>
</div>
<!--S:panel--><div id="panel" class="abs"><div id="phead" class="abs"></div>
<span class="t" style="left:54px;top:11.300px;font-size:9.300px;font-weight:bold;color:#1f1f2e;transform-origin:0 50%;transform:scaleX(0.9406)">Katılımcılar (153)</span>
<svg style="left:177px;top:9px" width="11" height="11" viewBox="0 0 11 11"><g fill="none" stroke="#5a6068" stroke-width="1.200"><path d="M5 1.500H2.500a1.300 1.300 0 0 0-1.300 1.300v5.700a1.300 1.300 0 0 0 1.300 1.300h5.700a1.300 1.300 0 0 0 1.300-1.300V6"/><path d="M6.800.800h3.400v3.400M10 1L5.500 5.500"/></g></svg>
<svg style="left:196px;top:11px" width="8" height="8" viewBox="0 0 8 8"><path d="M.8.800L7.200 7.200M7.200.800L.8 7.200" stroke="#6e7680" stroke-width="1"/></svg>
<div class="abs" style="left:12.500px;top:36px;width:189px;height:21px;border:1px solid #c3c7d6;border-radius:5px;background:#fff"></div>
<svg style="left:19.500px;top:42px" width="9" height="9" viewBox="0 0 9 9"><circle cx="3.700" cy="3.700" r="2.900" fill="none" stroke="#777" stroke-width=".9"/><path d="M5.900 5.900L8.300 8.300" stroke="#777" stroke-width=".9"/></svg>
<span class="t" style="left:31.500px;top:42.300px;font-size:8.900px;color:#858590;transform-origin:0 50%;transform:scaleX(0.9111)">Katılımcı bul</span>
<div class="abs" style="left:0;top:58px;width:213px;height:420.500px;overflow:hidden"><div class="abs" style="left:0;top:-58px;width:213px;height:500px">
<div class="row" style="top:58.65px"><div class="av" style="background:#fff;border-radius:50%"><svg style="left:0;top:0" width="18" height="18" viewBox="0 0 48 48"><path d="M3 0V24" stroke="#cf2a27" stroke-width="3.500"/><ellipse cx="24" cy="24" rx="21" ry="20" fill="none" stroke="#78a722" stroke-width="3.500"/><ellipse cx="22.500" cy="26" rx="17.500" ry="16.500" fill="none" stroke="#d42a2a" stroke-width="3.500"/><circle cx="22" cy="28" r="13" fill="#fff" stroke="#2a2a2a" stroke-width="4"/><path d="M21 29L30 19" stroke="#2a2a2a" stroke-width="3.500" stroke-linecap="round"/></svg></div><span class="pn" style="left:40px;font-size:9.1px;transform-origin:0 50%;transform:scaleX(0.8956)">Bebka ... (Oturum Sahibi, ben)</span><svg style="left:153.5px;top:10.400px" width="11" height="7" viewBox="0 0 11 8" preserveAspectRatio="none"><path d="M2.600 7.400h5.900a2.100 2.100 0 0 0 .3-4.200a3.200 3.200 0 0 0-6.200-.4a2.300 2.300 0 0 0 0 4.600z" fill="#fff" stroke="#7a808a" stroke-width=".7"/><circle cx="5.600" cy="4.700" r="1.250" fill="#e02828"/></svg><svg style="left:170px;top:7.900px" width="11" height="13" viewBox="0 0 11 13"><g fill="none" stroke="#e5484d" stroke-width=".9"><rect x="3.800" y="1.300" width="3.400" height="6.400" rx="1.700"/><path d="M2 6.200a3.500 3.500 0 0 0 7 0M5.500 9.800v2"/><path d="M9.800.700L1.500 12.300" stroke-width="1"/></g></svg><svg style="left:185px;top:8.900px" width="13" height="11" viewBox="0 0 13 11"><g fill="none" stroke="#e5484d" stroke-width=".9"><rect x=".8" y="2.200" width="8" height="6.600" rx="1.300"/><path d="M8.800 4.600l3-1.600v5l-3-1.600"/><path d="M10.800.500L1 10.500" stroke-width="1"/></g></svg></div>
<div class="row" style="top:85.85px"><div class="av" style="background:#2f7fc1;font-size:8.600px"><span style="display:inline-block;transform:scaleX(0.86)">BB</span></div><span class="pn" style="left:40px;font-size:9.1px;transform-origin:0 50%;transform:scaleX(0.9346)">b... (Ortak oturum sahibi)</span><div class="abs" style="left:137.500px;top:9.900px;width:11px;height:8px;background:#12a83a;border-radius:1.500px"></div><svg style="left:140.500px;top:11.400px" width="5" height="5" viewBox="0 0 5 5"><path d="M2.500.300L4.600 2.600H3.300V4.700H1.700V2.600H.4z" fill="#fff"/></svg><svg style="left:153.5px;top:10.400px" width="11" height="7" viewBox="0 0 11 8" preserveAspectRatio="none"><path d="M2.600 7.400h5.900a2.100 2.100 0 0 0 .3-4.200a3.200 3.200 0 0 0-6.200-.4a2.300 2.300 0 0 0 0 4.600z" fill="#fff" stroke="#7a808a" stroke-width=".7"/><circle cx="5.600" cy="4.700" r="1.250" fill="#e02828"/></svg><svg style="left:171px;top:7.900px" width="9" height="13" viewBox="0 0 9 13"><rect x="2.700" y="1" width="3.600" height="6.600" rx="1.800" fill="#6e7680"/><path d="M1 6.200a3.500 3.500 0 0 0 7 0M4.500 9.800v2" fill="none" stroke="#6e7680" stroke-width=".9"/></svg><svg style="left:185px;top:9.900px" width="13" height="9" viewBox="0 0 13 9"><g fill="none" stroke="#6e7680" stroke-width=".9"><rect x=".8" y="1.200" width="8" height="6.600" rx="1.300"/><path d="M9.600 3.200l2.400-1v4.600l-2.400-1z"/></g></svg></div>
<div class="row" style="top:113.05px"><div class="av" style="background:#a0704a"><svg style="left:0;top:0" width="18" height="18" viewBox="0 0 18 18"><defs><filter id="pb" x="-10%" y="-10%" width="120%" height="120%"><feGaussianBlur stdDeviation=".6"/></filter><linearGradient id="p1g" x1="0" y1="0" x2="1" y2=".4"><stop offset="0" stop-color="#e0a82a"/><stop offset=".45" stop-color="#c08038"/><stop offset="1" stop-color="#6a5aa8"/></linearGradient></defs><g filter="url(#pb)"><rect x="-2" y="-2" width="22" height="22" fill="url(#p1g)"/><rect x="-2" y="10" width="8" height="10" fill="#3a3560"/><rect x="0" y="5" width="5" height="5" fill="#d8c8a0"/><ellipse cx="10.500" cy="6.500" rx="3.600" ry="4" fill="#2e1c1c"/><ellipse cx="10.500" cy="7.800" rx="2.200" ry="2.600" fill="#d8a890"/><ellipse cx="11.500" cy="15.500" rx="5.500" ry="5" fill="#c42a4c"/><rect x="15" y="9" width="5" height="6" fill="#3a4a9a"/><rect x="5" y="12" width="3" height="6" fill="#e8e0e8"/></g></svg></div><span class="pn" style="left:42px;font-size:9.1px;transform-origin:0 50%;transform:scaleX(0.924)">oturum sahibi, çevirmen)</span><div class="abs" style="left:139.500px;top:8.400px;width:11.500px;height:11.500px;border-radius:50%;background:#e9e9ef;color:#333;font-size:5.500px;font-weight:bold;line-height:11.500px;text-align:center">T</div><svg style="left:153.5px;top:10.400px" width="11" height="7" viewBox="0 0 11 8" preserveAspectRatio="none"><path d="M2.600 7.400h5.900a2.100 2.100 0 0 0 .3-4.200a3.200 3.200 0 0 0-6.200-.4a2.300 2.300 0 0 0 0 4.600z" fill="#fff" stroke="#7a808a" stroke-width=".7"/><circle cx="5.600" cy="4.700" r="1.250" fill="#e02828"/></svg><svg style="left:171px;top:7.900px" width="9" height="13" viewBox="0 0 9 13"><rect x="2.800" y="1.200" width="3.400" height="6.400" rx="1.700" fill="none" stroke="#6e7680" stroke-width=".9"/><path d="M1 6.200a3.500 3.500 0 0 0 7 0M4.500 9.800v2" fill="none" stroke="#6e7680" stroke-width=".9"/></svg><svg style="left:185px;top:9.900px" width="13" height="9" viewBox="0 0 13 9"><g fill="none" stroke="#6e7680" stroke-width=".9"><rect x=".8" y="1.200" width="8" height="6.600" rx="1.300"/><path d="M9.600 3.200l2.400-1v4.600l-2.400-1z"/></g></svg></div>
<div class="row" style="top:140.25px"><div class="av" style="background:#27ae60;font-size:8.600px"><span style="display:inline-block;transform:scaleX(0.86)">SB</span></div><span class="pn" style="left:40px;font-size:9.1px;transform-origin:0 50%;transform:scaleX(0.9301)">Sevin... (Ortak oturum sahibi)</span><svg style="left:153.5px;top:10.400px" width="11" height="7" viewBox="0 0 11 8" preserveAspectRatio="none"><path d="M2.600 7.400h5.900a2.100 2.100 0 0 0 .3-4.200a3.200 3.200 0 0 0-6.200-.4a2.300 2.300 0 0 0 0 4.600z" fill="#fff" stroke="#7a808a" stroke-width=".7"/><circle cx="5.600" cy="4.700" r="1.250" fill="#e02828"/></svg><svg style="left:170px;top:7.900px" width="11" height="13" viewBox="0 0 11 13"><g fill="none" stroke="#e5484d" stroke-width=".9"><rect x="3.800" y="1.300" width="3.400" height="6.400" rx="1.700"/><path d="M2 6.200a3.500 3.500 0 0 0 7 0M5.500 9.800v2"/><path d="M9.800.700L1.500 12.300" stroke-width="1"/></g></svg><svg style="left:185px;top:9.900px" width="13" height="9" viewBox="0 0 13 9"><g fill="none" stroke="#6e7680" stroke-width=".9"><rect x=".8" y="1.200" width="8" height="6.600" rx="1.300"/><path d="M9.600 3.200l2.400-1v4.600l-2.400-1z"/></g></svg></div>
<div class="row" style="top:167.45px"><div class="av" style="background:#8ab048"><svg style="left:0;top:0" width="18" height="18" viewBox="0 0 18 18"><g filter="url(#pb)"><rect x="-2" y="-2" width="22" height="22" fill="#86ae48"/><rect x="1.500" y="3" width="2" height="14" fill="#e6d23e"/><rect x="14" y="-2" width="6" height="22" fill="#9aa878"/><ellipse cx="10.500" cy="7.500" rx="7" ry="7" fill="#a89070"/><ellipse cx="10.800" cy="11" rx="5.500" ry="6.500" fill="#d2aa92"/><path d="M8 13.500c1.500 1.500 4 1.500 5.500 0" stroke="#8a5a4a" stroke-width=".9" fill="none"/><path d="M7.500 9.500h2M12 9.500h2" stroke="#6a4a3a" stroke-width=".8"/></g></svg></div><span class="pn" style="left:40px;font-size:9.1px;transform-origin:0 50%;transform:scaleX(0.8364)">A.Ebru ERSOY</span><svg style="left:170px;top:7.900px" width="11" height="13" viewBox="0 0 11 13"><g fill="none" stroke="#e5484d" stroke-width=".9"><rect x="3.800" y="1.300" width="3.400" height="6.400" rx="1.700"/><path d="M2 6.200a3.500 3.500 0 0 0 7 0M5.500 9.800v2"/><path d="M9.800.700L1.500 12.300" stroke-width="1"/></g></svg><svg style="left:185px;top:8.900px" width="13" height="11" viewBox="0 0 13 11"><g fill="none" stroke="#e5484d" stroke-width=".9"><rect x=".8" y="2.200" width="8" height="6.600" rx="1.300"/><path d="M8.800 4.600l3-1.600v5l-3-1.600"/><path d="M10.800.500L1 10.500" stroke-width="1"/></g></svg></div>
<div class="row" style="top:194.65px"><div class="av" style="background:#1fa286;font-size:8.600px"><span style="display:inline-block;transform:scaleX(0.86)">AÇ</span></div><span class="pn" style="left:40px;font-size:9.1px;transform-origin:0 50%;transform:scaleX(0.8909)">Abdullah ÇAKMAK</span><svg style="left:170px;top:7.900px" width="11" height="13" viewBox="0 0 11 13"><g fill="none" stroke="#e5484d" stroke-width=".9"><rect x="3.800" y="1.300" width="3.400" height="6.400" rx="1.700"/><path d="M2 6.200a3.500 3.500 0 0 0 7 0M5.500 9.800v2"/><path d="M9.800.700L1.500 12.300" stroke-width="1"/></g></svg><svg style="left:185px;top:8.900px" width="13" height="11" viewBox="0 0 13 11"><g fill="none" stroke="#e5484d" stroke-width=".9"><rect x=".8" y="2.200" width="8" height="6.600" rx="1.300"/><path d="M8.800 4.600l3-1.600v5l-3-1.600"/><path d="M10.800.500L1 10.500" stroke-width="1"/></g></svg></div>
<div class="row" style="top:221.85px"><div class="av" style="background:#d65a06;font-size:8.600px"><span style="display:inline-block;transform:scaleX(0.86)">A</span></div><span class="pn" style="left:40px;font-size:9.1px;transform-origin:0 50%;transform:scaleX(0.9011)">Aleksandra</span><svg style="left:170px;top:7.900px" width="11" height="13" viewBox="0 0 11 13"><g fill="none" stroke="#e5484d" stroke-width=".9"><rect x="3.800" y="1.300" width="3.400" height="6.400" rx="1.700"/><path d="M2 6.200a3.500 3.500 0 0 0 7 0M5.500 9.800v2"/><path d="M9.800.700L1.500 12.300" stroke-width="1"/></g></svg><svg style="left:185px;top:8.900px" width="13" height="11" viewBox="0 0 13 11"><g fill="none" stroke="#e5484d" stroke-width=".9"><rect x=".8" y="2.200" width="8" height="6.600" rx="1.300"/><path d="M8.800 4.600l3-1.600v5l-3-1.600"/><path d="M10.800.500L1 10.500" stroke-width="1"/></g></svg></div>
<div class="row" style="top:249.05px"><div class="av" style="background:#c5382d;font-size:8.600px"><span style="display:inline-block;transform:scaleX(0.86)">AJ</span></div><span class="pn" style="left:40px;font-size:9.1px;transform-origin:0 50%;transform:scaleX(0.9062)">Aleksandra Jovanovikj</span><svg style="left:170px;top:7.900px" width="11" height="13" viewBox="0 0 11 13"><g fill="none" stroke="#e5484d" stroke-width=".9"><rect x="3.800" y="1.300" width="3.400" height="6.400" rx="1.700"/><path d="M2 6.200a3.500 3.500 0 0 0 7 0M5.500 9.800v2"/><path d="M9.800.700L1.500 12.300" stroke-width="1"/></g></svg><svg style="left:185px;top:8.900px" width="13" height="11" viewBox="0 0 13 11"><g fill="none" stroke="#e5484d" stroke-width=".9"><rect x=".8" y="2.200" width="8" height="6.600" rx="1.300"/><path d="M8.800 4.600l3-1.600v5l-3-1.600"/><path d="M10.800.500L1 10.500" stroke-width="1"/></g></svg></div>
<div class="row" style="top:276.25px"><div class="av" style="background:#28ae60;font-size:8.600px"><span style="display:inline-block;transform:scaleX(0.86)">AS</span></div><span class="pn" style="left:40px;font-size:9.1px;transform-origin:0 50%;transform:scaleX(0.8988)">Aleksandra Stoilkovska</span><svg style="left:170px;top:7.900px" width="11" height="13" viewBox="0 0 11 13"><g fill="none" stroke="#e5484d" stroke-width=".9"><rect x="3.800" y="1.300" width="3.400" height="6.400" rx="1.700"/><path d="M2 6.200a3.500 3.500 0 0 0 7 0M5.500 9.800v2"/><path d="M9.800.700L1.500 12.300" stroke-width="1"/></g></svg><svg style="left:185px;top:8.900px" width="13" height="11" viewBox="0 0 13 11"><g fill="none" stroke="#e5484d" stroke-width=".9"><rect x=".8" y="2.200" width="8" height="6.600" rx="1.300"/><path d="M8.800 4.600l3-1.600v5l-3-1.600"/><path d="M10.800.500L1 10.500" stroke-width="1"/></g></svg></div>
<div class="row" style="top:303.45px"><div class="av" style="background:#1fa67a;font-size:8.600px"><span style="display:inline-block;transform:scaleX(0.86)">AS</span></div><span class="pn" style="left:40px;font-size:9.1px;transform-origin:0 50%;transform:scaleX(0.8989)">Aleksandra Stojanovska</span><svg style="left:170px;top:7.900px" width="11" height="13" viewBox="0 0 11 13"><g fill="none" stroke="#e5484d" stroke-width=".9"><rect x="3.800" y="1.300" width="3.400" height="6.400" rx="1.700"/><path d="M2 6.200a3.500 3.500 0 0 0 7 0M5.500 9.800v2"/><path d="M9.800.700L1.500 12.300" stroke-width="1"/></g></svg><svg style="left:185px;top:8.900px" width="13" height="11" viewBox="0 0 13 11"><g fill="none" stroke="#e5484d" stroke-width=".9"><rect x=".8" y="2.200" width="8" height="6.600" rx="1.300"/><path d="M8.800 4.600l3-1.600v5l-3-1.600"/><path d="M10.800.500L1 10.500" stroke-width="1"/></g></svg></div>
<div class="row" style="top:330.65px"><div class="av" style="background:#1fa286;font-size:8.600px"><span style="display:inline-block;transform:scaleX(0.86)">AZ</span></div><span class="pn" style="left:40px;font-size:9.1px;transform-origin:0 50%;transform:scaleX(0.9139)">Alessandro Zeppelli</span><svg style="left:170px;top:7.900px" width="11" height="13" viewBox="0 0 11 13"><g fill="none" stroke="#e5484d" stroke-width=".9"><rect x="3.800" y="1.300" width="3.400" height="6.400" rx="1.700"/><path d="M2 6.200a3.500 3.500 0 0 0 7 0M5.500 9.800v2"/><path d="M9.800.700L1.500 12.300" stroke-width="1"/></g></svg><svg style="left:185px;top:9.900px" width="13" height="9" viewBox="0 0 13 9"><g fill="none" stroke="#6e7680" stroke-width=".9"><rect x=".8" y="1.200" width="8" height="6.600" rx="1.300"/><path d="M9.600 3.200l2.400-1v4.600l-2.400-1z"/></g></svg></div>
<div class="row" style="top:357.85px"><div class="av" style="background:#27ae60;font-size:8.600px"><span style="display:inline-block;transform:scaleX(0.86)">A</span></div><span class="pn" style="left:40px;font-size:9.1px;transform-origin:0 50%;transform:scaleX(0.9288)">Andrijana</span><svg style="left:170px;top:7.900px" width="11" height="13" viewBox="0 0 11 13"><g fill="none" stroke="#e5484d" stroke-width=".9"><rect x="3.800" y="1.300" width="3.400" height="6.400" rx="1.700"/><path d="M2 6.200a3.500 3.500 0 0 0 7 0M5.500 9.800v2"/><path d="M9.800.700L1.500 12.300" stroke-width="1"/></g></svg><svg style="left:185px;top:8.900px" width="13" height="11" viewBox="0 0 13 11"><g fill="none" stroke="#e5484d" stroke-width=".9"><rect x=".8" y="2.200" width="8" height="6.600" rx="1.300"/><path d="M8.800 4.600l3-1.600v5l-3-1.600"/><path d="M10.800.500L1 10.500" stroke-width="1"/></g></svg></div>
<div class="row" style="top:385.05px"><div class="av" style="background:#d65a06;font-size:8.600px"><span style="display:inline-block;transform:scaleX(0.86)">A</span></div><span class="pn" style="left:40px;font-size:9.1px;transform-origin:0 50%;transform:scaleX(0.88)">Anna</span><svg style="left:170px;top:7.900px" width="11" height="13" viewBox="0 0 11 13"><g fill="none" stroke="#e5484d" stroke-width=".9"><rect x="3.800" y="1.300" width="3.400" height="6.400" rx="1.700"/><path d="M2 6.200a3.500 3.500 0 0 0 7 0M5.500 9.800v2"/><path d="M9.800.700L1.500 12.300" stroke-width="1"/></g></svg><svg style="left:185px;top:8.900px" width="13" height="11" viewBox="0 0 13 11"><g fill="none" stroke="#e5484d" stroke-width=".9"><rect x=".8" y="2.200" width="8" height="6.600" rx="1.300"/><path d="M8.800 4.600l3-1.600v5l-3-1.600"/><path d="M10.800.500L1 10.500" stroke-width="1"/></g></svg></div>
<div class="row" style="top:412.25px"><div class="av" style="background:#f1592a;font-size:10.500px;font-weight:normal"><span style="display:inline-block;transform:scaleX(1)">A</span></div><span class="pn" style="left:40px;font-size:9.1px;transform-origin:0 50%;transform:scaleX(0.8839)">Aysun Ceylan HATMTAL</span><svg style="left:170px;top:7.900px" width="11" height="13" viewBox="0 0 11 13"><g fill="none" stroke="#e5484d" stroke-width=".9"><rect x="3.800" y="1.300" width="3.400" height="6.400" rx="1.700"/><path d="M2 6.200a3.500 3.500 0 0 0 7 0M5.500 9.800v2"/><path d="M9.800.700L1.500 12.300" stroke-width="1"/></g></svg><svg style="left:185px;top:8.900px" width="13" height="11" viewBox="0 0 13 11"><g fill="none" stroke="#e5484d" stroke-width=".9"><rect x=".8" y="2.200" width="8" height="6.600" rx="1.300"/><path d="M8.800 4.600l3-1.600v5l-3-1.600"/><path d="M10.800.500L1 10.500" stroke-width="1"/></g></svg></div>
<div class="row" style="top:439.45px"><div class="av" style="background:#f39c12;font-size:8.600px"><span style="display:inline-block;transform:scaleX(0.86)">AY</span></div><span class="pn" style="left:40px;font-size:9.1px;transform-origin:0 50%;transform:scaleX(0.8634)">Ayşe Yassıkaya</span><svg style="left:170px;top:7.900px" width="11" height="13" viewBox="0 0 11 13"><g fill="none" stroke="#e5484d" stroke-width=".9"><rect x="3.800" y="1.300" width="3.400" height="6.400" rx="1.700"/><path d="M2 6.200a3.500 3.500 0 0 0 7 0M5.500 9.800v2"/><path d="M9.800.700L1.500 12.300" stroke-width="1"/></g></svg><svg style="left:185px;top:8.900px" width="13" height="11" viewBox="0 0 13 11"><g fill="none" stroke="#e5484d" stroke-width=".9"><rect x=".8" y="2.200" width="8" height="6.600" rx="1.300"/><path d="M8.800 4.600l3-1.600v5l-3-1.600"/><path d="M10.800.500L1 10.500" stroke-width="1"/></g></svg></div>
<div class="row" style="top:466.65px"><div class="av" style="background:#9a9a94"><div class="abs" style="left:1px;top:1px;width:16px;height:5px;border-radius:6px 6px 2px 2px;background:#3e3e3a"></div></div><svg style="left:170px;top:7.900px" width="11" height="13" viewBox="0 0 11 13"><g fill="none" stroke="#e5484d" stroke-width=".9"><rect x="3.800" y="1.300" width="3.400" height="6.400" rx="1.700"/><path d="M2 6.200a3.500 3.500 0 0 0 7 0M5.500 9.800v2"/><path d="M9.800.700L1.500 12.300" stroke-width="1"/></g></svg><svg style="left:185px;top:8.900px" width="13" height="11" viewBox="0 0 13 11"><g fill="none" stroke="#e5484d" stroke-width=".9"><rect x=".8" y="2.200" width="8" height="6.600" rx="1.300"/><path d="M8.800 4.600l3-1.600v5l-3-1.600"/><path d="M10.800.500L1 10.500" stroke-width="1"/></g></svg></div>
</div></div>
<div class="abs" style="left:205.500px;top:58px;width:7.500px;height:420.500px;background:#f6f6f9"></div>
<div class="abs" style="left:206px;top:58.500px;width:4.500px;height:46px;background:#9b9ba6;border-radius:2.500px"></div>
<div class="abs" style="left:14.5px;top:488.600px;width:55px;height:15.800px;border:1px solid #b0b2bc;border-radius:5px"><span class="t" style="left:7.00px;top:2.700px;font-size:8.800px;color:#2a2a3a;transform-origin:0 50%;transform:scaleX(0.9063)">Davet Edin</span></div>
<div class="abs" style="left:84px;top:488.600px;width:85px;height:15.800px;border:1px solid #b0b2bc;border-radius:5px"><span class="t" style="left:7.00px;top:2.700px;font-size:8.800px;color:#2a2a3a;transform-origin:0 50%;transform:scaleX(0.9162)">Tümünü Sessize Al</span></div>
<div class="abs" style="left:183px;top:488.600px;width:16px;height:15.800px;border:1px solid #b0b2bc;border-radius:5px"><svg style="left:3.500px;top:6px" width="7" height="2" viewBox="0 0 7 2"><circle cx="1" cy="1" r=".75" fill="#333"/><circle cx="3.500" cy="1" r=".75" fill="#333"/><circle cx="6" cy="1" r=".75" fill="#333"/></svg></div>
</div><!--E:panel-->
<!--S:tb--><div id="tb" class="abs">
<svg style="left:28px;top:8px" width="14" height="16" viewBox="0 0 14 16"><g fill="none" stroke="#f2f2f2" stroke-width="1"><rect x="4.800" y="1.500" width="4.400" height="7.500" rx="2.200"/><path d="M2.800 7.500a4.200 4.200 0 0 0 8.400 0M7 11.800v2.200M4.800 14.200h4.400"/></g><path d="M12.500 .8L1.800 13.500" stroke="#f0325a" stroke-width="1.300"/></svg>
<span class="tl" style="left:35px;transform:translateX(-50%) scaleX(0.7573)">Ses</span><svg style="left:52.5px;top:12.500px" width="7" height="5" viewBox="0 0 7 5"><path d="M1 4L3.500 1.500L6 4" fill="none" stroke="#e0e0e0" stroke-width="1.100"/></svg>
<svg style="left:88px;top:9px" width="18" height="14" viewBox="0 0 18 14"><g fill="none" stroke="#f2f2f2" stroke-width="1"><rect x="1" y="3" width="10.500" height="8" rx="1.800"/><path d="M11.500 6l4.500-2.300v6.600L11.500 8"/></g><path d="M16 .8L2 13.200" stroke="#f0325a" stroke-width="1.300"/></svg>
<span class="tl" style="left:97px;transform:translateX(-50%) scaleX(0.9515)">Video</span><svg style="left:117.5px;top:12.500px" width="7" height="5" viewBox="0 0 7 5"><path d="M1 4L3.500 1.500L6 4" fill="none" stroke="#e0e0e0" stroke-width="1.100"/></svg>
<svg style="left:183px;top:9.500px" width="14" height="13" viewBox="0 0 14 13"><g fill="none" stroke="#f2f2f2" stroke-width="1"><circle cx="5" cy="3.500" r="2.300"/><path d="M1 11.500v-1a3.200 3.200 0 0 1 3.200-3.200h1.600a3.200 3.200 0 0 1 3.200 3.200v1z"/><circle cx="10.500" cy="4.200" r="1.800"/><path d="M10.800 7.600a2.600 2.600 0 0 1 2.400 2.600v1.300h-2.400"/></g></svg>
<span class="t" style="left:202px;top:10.500px;font-size:7.600px;color:#e8e8e8">153</span>
<span class="tl" style="left:190px;transform:translateX(-50%) scaleX(0.8886)">Katılımcılar</span><svg style="left:222.0px;top:12.500px" width="7" height="5" viewBox="0 0 7 5"><path d="M1 4L3.500 1.500L6 4" fill="none" stroke="#e0e0e0" stroke-width="1.100"/></svg>
<svg style="left:255px;top:10px" width="14" height="13" viewBox="0 0 14 13"><path d="M3 1h7.500a2 2 0 0 1 2 2v4.500a2 2 0 0 1-2 2H7l-3 2.500v-2.500H3a2 2 0 0 1-2-2V3a2 2 0 0 1 2-2z" fill="none" stroke="#f2f2f2" stroke-width="1"/><circle cx="4.300" cy="5.300" r=".8" fill="#f2f2f2"/><circle cx="6.800" cy="5.300" r=".8" fill="#f2f2f2"/><circle cx="9.300" cy="5.300" r=".8" fill="#f2f2f2"/></svg>
<div class="abs" style="left:267px;top:6px;width:9px;height:9px;border-radius:50%;background:#e5373c;font-size:6.500px;font-weight:bold;line-height:9px;text-align:center;color:#fff">3</div>
<span class="tl" style="left:263.5px;transform:translateX(-50%) scaleX(0.9218)">Sohbet</span><svg style="left:282.0px;top:12.500px" width="7" height="5" viewBox="0 0 7 5"><path d="M1 4L3.500 1.500L6 4" fill="none" stroke="#e0e0e0" stroke-width="1.100"/></svg>
<svg style="left:313px;top:9.500px" width="16" height="14" viewBox="0 0 16 14"><path d="M8 12.800C4 10 1 7.500 1 4.600A3.300 3.300 0 0 1 8 3a3.300 3.300 0 0 1 7 1.600C15 7.500 12 10 8 12.800z" fill="none" stroke="#f2f2f2" stroke-width="1"/></svg>
<span class="tl" style="left:321px;transform:translateX(-50%) scaleX(0.9093)">Tepki ver</span>
<div class="abs" style="left:372.500px;top:8.500px;width:16px;height:13.500px;background:#22e07c;border-radius:2.500px"></div>
<svg style="left:376.500px;top:11px" width="8" height="9" viewBox="0 0 8 9"><path d="M4 .5L7.500 4.200H5.200V8.500H2.800V4.200H.5z" fill="#0a0a0a"/></svg>
<span class="tl" style="left:380.7px;transform:translateX(-50%) scaleX(0.8514)">Paylaş</span><svg style="left:401.2px;top:12.500px" width="7" height="5" viewBox="0 0 7 5"><path d="M1 4L3.500 1.500L6 4" fill="none" stroke="#e0e0e0" stroke-width="1.100"/></svg>
<svg style="left:452.500px;top:8.500px" width="13" height="15" viewBox="0 0 13 15"><path d="M6.500 .8L12 2.800V7.500C12 10.800 9.500 13 6.500 14.200C3.500 13 1 10.800 1 7.500V2.800z" fill="none" stroke="#f2f2f2" stroke-width="1"/><path d="M6.500 3.200V7.500H3.200V4.400zM6.500 7.500H9.800C9.800 9.500 8.500 10.800 6.500 11.800z" fill="#f2f2f2"/></svg>
<span class="tl" style="left:459px;transform:translateX(-50%) scaleX(0.9176)">Oturum sahibi araçları</span>
<svg style="left:526px;top:6.500px" width="20" height="19" viewBox="0 0 18 17"><path d="M8 2.500C8.600 7 10 8.500 14.500 9.200C10 9.900 8.600 11.400 8 16C7.400 11.400 6 9.900 1.500 9.200C6 8.500 7.400 7 8 2.500z" fill="#dff3ff"/><path d="M14.300 .8C14.600 2.800 15.200 3.400 17.200 3.700C15.200 4 14.600 4.600 14.300 6.600C14 4.600 13.400 4 11.400 3.700C13.400 3.400 14 2.800 14.300 .8z" fill="#dff3ff"/></svg>
<span class="tl" style="left:535.7px;transform:translateX(-50%) scaleX(0.9203)">AI Companion</span>
<svg style="left:588.500px;top:8.500px" width="16" height="15" viewBox="0 0 16 15"><g fill="none" stroke="#f2f2f2" stroke-width="1.100"><path d="M1 5V3.500A2.500 2.500 0 0 1 3.500 1H5.500"/><circle cx="11.300" cy="4" r="2.600"/><circle cx="4" cy="11" r="2.600"/><path d="M14.500 9.500V11.500A2.500 2.500 0 0 1 12 14H10"/></g></svg>
<span class="tl" style="left:596px;transform:translateX(-50%) scaleX(0.9252)">Uygulamalar</span><svg style="left:613.0px;top:12.500px" width="7" height="5" viewBox="0 0 7 5"><path d="M1 4L3.500 1.500L6 4" fill="none" stroke="#e0e0e0" stroke-width="1.100"/></svg>
<div class="abs" style="left:643.500px;top:7.500px;width:16.500px;height:16.500px;border-radius:50%;background:#a2a2a2;color:#2a2a2a;font-weight:bold;font-size:9px;line-height:16.500px;text-align:center">T</div>
<span class="tl" style="left:651.5px;transform:translateX(-50%) scaleX(0.8631)">Türkçe</span>
<svg style="left:697px;top:7px" width="18" height="18" viewBox="0 0 18 18"><circle cx="9" cy="9" r="7.800" fill="none" stroke="#f2f2f2" stroke-width="1.100"/><circle cx="5.600" cy="9" r="1" fill="#f2f2f2"/><circle cx="9" cy="9" r="1" fill="#f2f2f2"/><circle cx="12.400" cy="9" r="1" fill="#f2f2f2"/></svg>
<span class="tl" style="left:706px;transform:translateX(-50%) scaleX(0.8831)">Daha fazla</span>
<svg style="left:769px;top:7.500px" width="18" height="17" viewBox="0 0 18 17"><path d="M5 1.200H13L17 8.500L13 15.800H5L1 8.500z" fill="none" stroke="#e0245e" stroke-width="1.300" stroke-linejoin="round"/><path d="M6.300 5.800L11.700 11.200M11.700 5.800L6.300 11.200" stroke="#fff" stroke-width="1.700"/></svg>
<span class="tl" style="left:778px;transform:translateX(-50%) scaleX(0.8824)">Sonlandır</span>
</div><!--E:tb-->
<!--S:task--><div id="task" class="abs">
<svg style="left:12px;top:7px" width="19" height="18" viewBox="0 0 19 18"><path d="M3 9.500h7a2.500 2.500 0 0 0 .3-5a3.600 3.600 0 0 0-6.900-.5A2.800 2.800 0 0 0 3 9.500z" fill="#c9d6e6"/><path d="M4 14.500a5 5 0 0 0 8-3a4 4 0 0 1-6-4a5 5 0 0 0-2 7z" fill="#f5b833"/><path d="M8 17h7.500a2.300 2.300 0 0 0 .2-4.600a3.300 3.300 0 0 0-6.300-.4A2.500 2.500 0 0 0 8 17z" fill="#9fc4ea"/></svg>
<div class="abs" style="left:21px;top:5.500px;width:8.500px;height:8.500px;border-radius:50%;background:#d92c2c;color:#fff;font-size:6.500px;font-weight:bold;line-height:8.500px;text-align:center">1</div>
<span class="t" style="left:34.500px;top:6.500px;font-size:7.800px;color:#f0f0f0">8°C</span>
<span class="t" style="left:34.500px;top:17.500px;font-size:7.850px;color:#ececec">Parçalı bulutlu</span>
<svg style="left:283px;top:8.500px" width="16" height="16" viewBox="0 0 16 16"><defs><linearGradient id="wg" x1="0" y1="0" x2="1" y2="1"><stop offset="0" stop-color="#7bdcff"/><stop offset="1" stop-color="#18a0e8"/></linearGradient></defs><g fill="url(#wg)"><rect x="0" y="0" width="7.400" height="7.400" rx=".6"/><rect x="8.400" y="0" width="7.400" height="7.400" rx=".6"/><rect x="0" y="8.400" width="7.400" height="7.400" rx=".6"/><rect x="8.400" y="8.400" width="7.400" height="7.400" rx=".6"/></g></svg>
<div class="abs" style="left:307.500px;top:6px;width:146px;height:20.500px;border-radius:10.500px;background:#f1f0ee"></div>
<svg style="left:314.500px;top:11px" width="11" height="11" viewBox="0 0 11 11"><circle cx="4.400" cy="4.400" r="3.400" fill="none" stroke="#333" stroke-width="1"/><path d="M7 7L10 10" stroke="#333" stroke-width="1.100"/></svg>
<span class="t" style="left:331.500px;top:11.500px;font-size:8.800px;color:#5c5c5c">Ara</span>
<svg style="left:420px;top:8px" width="30" height="17" viewBox="0 0 30 17"><path d="M1 14.500c6 2 14 2 20 0l-2-2H3z" fill="#e8c9a0"/><path d="M4 5l7 1.500l6-1.500v7l-6 1.500l-7-1.500z" fill="#e9e4d2" stroke="#7aa06a" stroke-width=".6"/><path d="M12 8l5-6l1.500 1.200l-5 6z" fill="#f0a23a"/><path d="M21 5.500c0-2 1.500-3.500 3.500-3.500s3.500 1.500 3.500 3.500v8.500h-7z" fill="#2f6be0"/><path d="M22.500 3l1-2h2l1 2z" fill="#5b8ff0"/><rect x="22.500" y="8" width="4" height="3.500" rx=".8" fill="#5b8ff0"/></svg>
<svg style="left:461px;top:8.500px" width="18" height="15" viewBox="0 0 18 15"><rect x="1" y="4" width="11" height="10" rx="1.200" fill="#8a8a8a"/><rect x="5" y="1" width="12" height="10.500" rx="1.200" fill="#ececec"/></svg>
<svg style="left:490px;top:7px" width="18" height="18" viewBox="0 0 18 18"><defs><linearGradient id="cp1" x1="0" y1="0" x2="1" y2="1"><stop offset="0" stop-color="#2a8cf0"/><stop offset=".5" stop-color="#9a5ae8"/><stop offset="1" stop-color="#f06a8a"/></linearGradient><linearGradient id="cp2" x1="0" y1="1" x2="1" y2="0"><stop offset="0" stop-color="#f2c230"/><stop offset=".5" stop-color="#5ad07a"/><stop offset="1" stop-color="#2ab0e8"/></linearGradient></defs><path d="M6 2h5c1.500 0 2.300.8 2.800 2l2.700 8c.6 1.800-.4 3-2 3h-3.500c-1.400 0-2.300-.8-2.700-2L6 6.500z" fill="url(#cp1)"/><path d="M12 16H7c-1.500 0-2.300-.8-2.800-2L1.500 6c-.6-1.800.4-3 2-3H7c1.400 0 2.300.8 2.700 2L12 11.500z" fill="url(#cp2)" opacity=".92"/></svg>
<svg style="left:520px;top:7.500px" width="18" height="17" viewBox="0 0 18 17"><circle cx="11.500" cy="4" r="2.600" fill="#7b83eb"/><circle cx="15.500" cy="5" r="1.700" fill="#5059c9"/><path d="M8 7h7.500a1 1 0 0 1 1 1v4.500a3.500 3.500 0 0 1-7 .5z" fill="#7b83eb"/><rect x="1" y="4.500" width="9.500" height="9.500" rx="1.200" fill="#4b53bc"/><text x="5.750" y="11.800" text-anchor="middle" font-family="Liberation Sans, sans-serif" font-weight="bold" font-size="7" fill="#fff">T</text></svg>
<svg style="left:549px;top:7.500px" width="18" height="17" viewBox="0 0 18 17"><circle cx="8.500" cy="8.500" r="7.800" fill="#e33b2e"/><path d="M8.500 8.500L1.700 4.700A7.800 7.800 0 0 0 6.200 16z" fill="#2da94f"/><path d="M8.500 8.500L6.200 16A7.800 7.800 0 0 0 15.300 4.700z" fill="#fcc31e"/><path d="M1.700 4.700A7.800 7.800 0 0 1 15.300 4.700H8.500z" fill="#e33b2e"/><circle cx="8.500" cy="8.500" r="3.700" fill="#fff"/><circle cx="8.500" cy="8.500" r="2.900" fill="#3b7de8"/></svg>
<div class="abs" style="left:559.500px;top:5.500px;width:9px;height:9px;border-radius:50%;background:#4caf50;color:#fff;font-size:6px;line-height:9px;text-align:center">A</div>
<div class="abs" style="left:555.500px;top:27.500px;width:4px;height:1.500px;background:#9a9a9a;border-radius:1px"></div>
<svg style="left:578px;top:7px" width="18" height="18" viewBox="0 0 18 18"><defs><radialGradient id="ff" cx=".5" cy=".3" r=".8"><stop offset="0" stop-color="#ffd43a"/><stop offset=".5" stop-color="#ff8a1e"/><stop offset="1" stop-color="#e8284a"/></radialGradient></defs><path d="M9 1.500c1.500 1 2.500 1.200 3.500.8c2.500 1.500 4.500 4 4.500 7.500a8 8 0 0 1-16 0c0-2.500 1-4.500 2.500-6c0 1 .5 2 1.200 2.200C5 4 6.500 2 9 1.500z" fill="url(#ff)"/><circle cx="9.300" cy="10" r="3.800" fill="#7a3ad8"/><path d="M5.500 9c1-2 3-2.500 5-1.500c-2 0-2.500 1.500-1.500 2.500c-2 .5-3-.2-3.500-1z" fill="#ffb52e"/></svg>
<svg style="left:608px;top:8px" width="17" height="16.500" viewBox="0 0 17 16.500"><rect width="17" height="16.500" fill="#e8d9b8"/><rect x="1" y="1" width="15" height="7" fill="#4a9a6a"/><g fill="#e34a3a"><rect x="2" y="2" width="2.500" height="2"/><rect x="9" y="2" width="2.500" height="2"/></g><g fill="#3a6ad8"><rect x="5.500" y="2" width="2.500" height="2"/><rect x="12.500" y="2" width="2.500" height="2"/></g><g fill="#f2c230"><rect x="2" y="5" width="2.500" height="2"/><rect x="9" y="5" width="2.500" height="2"/></g><rect x="3" y="10" width="11" height="1.200" fill="#5a4a3a"/><rect x="4" y="12.500" width="9" height="1.200" fill="#5a4a3a"/></svg>
<svg style="left:637px;top:7.500px" width="18" height="17" viewBox="0 0 18 17"><defs><linearGradient id="dm" x1="0" y1="0" x2="1" y2="0"><stop offset="0" stop-color="#e8209a"/><stop offset=".5" stop-color="#f0302a"/><stop offset="1" stop-color="#ff8a1e"/></linearGradient></defs><path d="M9 .8L17 8.500L9 16.200L1 8.500z" fill="url(#dm)"/></svg>
<svg style="left:666px;top:8.500px" width="18" height="15" viewBox="0 0 18 15"><path d="M1 2.500a1.200 1.200 0 0 1 1.200-1.200h4.300l1.800 1.900h7.500A1.200 1.200 0 0 1 17 4.400V13a1.200 1.200 0 0 1-1.200 1.200H2.200A1.200 1.200 0 0 1 1 13z" fill="#f6c445"/><rect x="1" y="5" width="16" height="9.200" rx="1.200" fill="#fbd867"/><rect x="5" y="10.500" width="8" height="3.700" fill="#2f8be8"/></svg>
<svg style="left:696px;top:7.500px" width="17" height="17" viewBox="0 0 17 17"><ellipse cx="8.500" cy="8.500" rx="5.800" ry="6.600" fill="none" stroke="#e8182c" stroke-width="4"/></svg>
<div class="abs" style="left:721px;top:3.500px;width:25px;height:25.500px;border-radius:3px;background:rgba(255,255,255,.05);border:.5px solid rgba(255,255,255,.05)"></div>
<div class="abs" style="left:725.500px;top:7px;width:16.500px;height:16.500px;border-radius:7.500px;background:#1f6af0"></div>
<span class="t" style="left:728.500px;top:13px;font-size:4.500px;font-weight:bold;color:#fff">zoom</span>
<div class="abs" style="left:729px;top:27px;width:10px;height:1.800px;background:#4cc2ff;border-radius:1px"></div>
<svg style="left:840px;top:13px" width="9" height="6" viewBox="0 0 9 6"><path d="M1 5L4.500 1.500L8 5" fill="none" stroke="#f0f0f0" stroke-width="1.100"/></svg>
<svg style="left:859px;top:9px" width="14" height="14" viewBox="0 0 14 14"><g fill="none" stroke="#f0f0f0" stroke-width="1"><path d="M2 6a4.500 4.500 0 0 1 8-2.500M10.500 1v3h-3"/><path d="M10.500 8a4.500 4.500 0 0 1-8 2.500M2 13v-3h3"/></g><circle cx="10.800" cy="10.500" r="2.300" fill="#f29a1e"/></svg>
<svg style="left:883px;top:8.500px" width="9" height="15" viewBox="0 0 9 15"><rect x="2.700" y="1" width="3.600" height="7.500" rx="1.800" fill="#5bb8f0"/><path d="M1 7a3.500 3.500 0 0 0 7 0M4.500 10.800v2.700" fill="none" stroke="#5bb8f0" stroke-width="1"/></svg>
<svg style="left:901px;top:10px" width="14" height="11" viewBox="0 0 14 11"><g fill="none" stroke="#f0f0f0" stroke-width="1.100"><path d="M1 4a8.500 8.500 0 0 1 12 0"/><path d="M3 6.300a5.600 5.600 0 0 1 8 0"/><path d="M5 8.500a2.800 2.800 0 0 1 4 0"/></g><circle cx="7" cy="10" r=".9" fill="#f0f0f0"/></svg>
<svg style="left:917px;top:10px" width="13" height="11" viewBox="0 0 13 11"><path d="M1 4h2l3-2.800v8.600L3 7H1z" fill="none" stroke="#f0f0f0" stroke-width="1"/><path d="M8 3.500a3 3 0 0 1 0 4M9.800 2a5 5 0 0 1 0 7" fill="none" stroke="#f0f0f0" stroke-width=".9"/></svg>
<svg style="left:933px;top:10px" width="15" height="11" viewBox="0 0 15 11"><rect x="1" y="2.500" width="11.500" height="7" rx="1.500" fill="#f0f0f0"/><rect x="12.800" y="4.800" width="1.200" height="2.500" fill="#f0f0f0"/><path d="M3.500 .8l2 1.500h-3z" fill="#f0f0f0"/></svg>
<span class="t" style="left:968.500px;top:6.500px;font-size:7.900px;color:#f2f2f2;width:26.500px;text-align:right">20:49</span>
<span class="t" style="left:956.500px;top:17.500px;font-size:7.750px;color:#f2f2f2">26.11.2024</span>
<svg style="left:1000px;top:9.500px" width="10" height="12" viewBox="0 0 10 12"><path d="M5 .8a3.300 3.300 0 0 1 3.300 3.300v2.700l1.200 2H.5l1.200-2V4.100A3.300 3.300 0 0 1 5 .8z" fill="#7fd4ff"/><path d="M3.800 9.700a1.300 1.300 0 0 0 2.400 0z" fill="#7fd4ff"/></svg>
</div><!--E:task-->
</body>
</html>
